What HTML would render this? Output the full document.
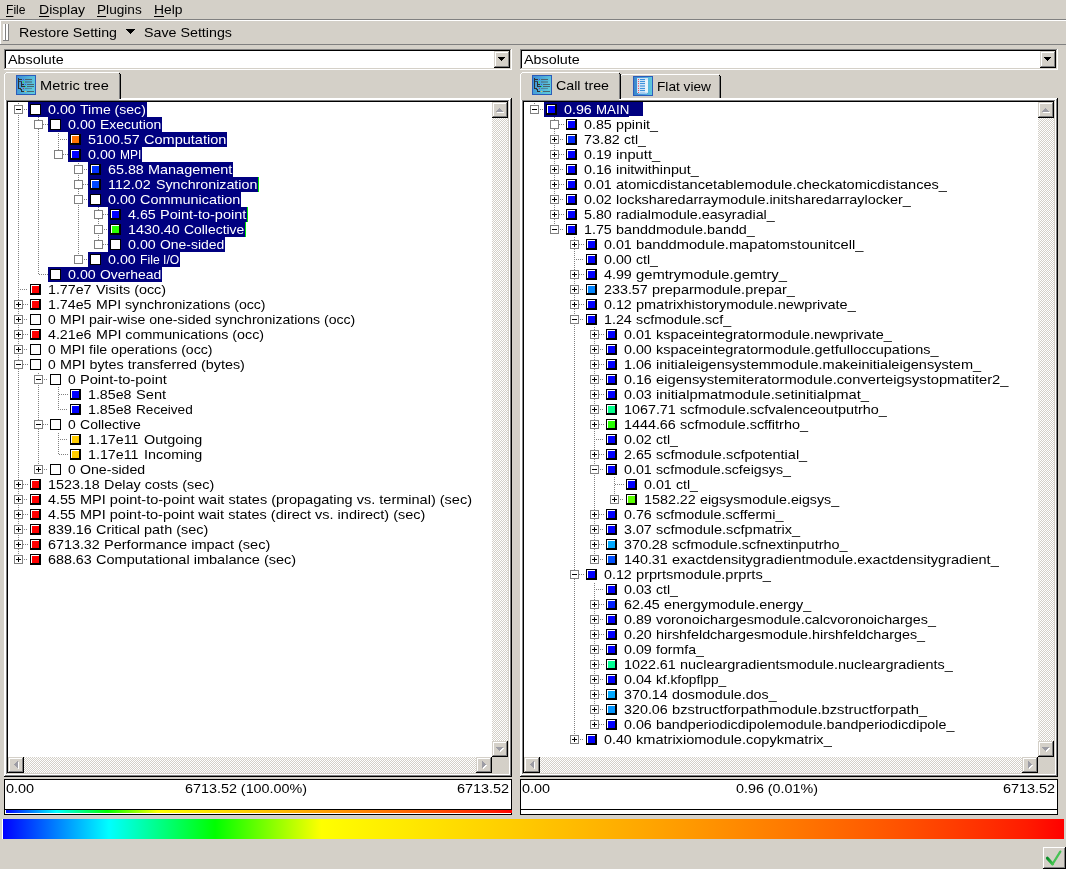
<!DOCTYPE html>
<html><head><meta charset="utf-8"><title>Cube</title><style>
html,body{margin:0;padding:0;}
body{width:1066px;height:869px;background:#d4d0c8;position:relative;overflow:hidden;font-family:"Liberation Sans",sans-serif;}
div,span,svg{position:absolute;}
#w{left:0;top:0;width:1066px;height:869px;will-change:transform;}
.t{white-space:nowrap;transform-origin:0 0;display:block;}
u{text-decoration:underline;text-underline-offset:2px;text-decoration-thickness:1px;}
.dot{background-image:repeating-conic-gradient(#808080 0 25%,transparent 0 50%);background-size:2px 2px;}
.chk{background-color:#fff;background-image:repeating-conic-gradient(#d4d0c8 0 25%,transparent 0 50%);background-size:2px 2px;}
</style></head><body><div id="w">
<span class="t" style="left:6px;top:2px;height:16px;line-height:16px;color:#000;font-size:13.5px;transform:scaleX(0.8964)"><u>F</u>ile</span>
<span class="t" style="left:38.5px;top:2px;height:16px;line-height:16px;color:#000;font-size:13.5px;transform:scaleX(1.0392)"><u>D</u>isplay</span>
<span class="t" style="left:97px;top:2px;height:16px;line-height:16px;color:#000;font-size:13.5px;transform:scaleX(1.0096)"><u>P</u>lugins</span>
<span class="t" style="left:154px;top:2px;height:16px;line-height:16px;color:#000;font-size:13.5px;transform:scaleX(1.0265)"><u>H</u>elp</span>
<div style="left:0px;top:19px;width:1066px;height:1px;background:#808080;"></div>
<div style="left:0px;top:20px;width:1066px;height:1px;background:#fff;"></div>
<div style="left:0px;top:20px;width:1px;height:24px;background:#fff;"></div>
<div style="left:0px;top:44px;width:1066px;height:1px;background:#808080;"></div>
<div style="left:3px;top:24px;width:2px;height:17px;background:#fff;"></div>
<div style="left:5px;top:24px;width:1px;height:17px;background:#808080;"></div>
<div style="left:3px;top:40px;width:3px;height:1px;background:#808080;"></div>
<div style="left:6px;top:24px;width:2px;height:17px;background:#fff;"></div>
<div style="left:8px;top:24px;width:1px;height:17px;background:#808080;"></div>
<div style="left:6px;top:40px;width:3px;height:1px;background:#808080;"></div>
<span class="t" style="left:18.8px;top:25px;height:15px;line-height:15px;color:#000;font-size:13.5px;transform:scaleX(1.0532)">Restore Setting</span>
<div style="left:126px;top:29px;width:9px;height:1px;background:#000;"></div>
<div style="left:127px;top:30px;width:7px;height:1px;background:#000;"></div>
<div style="left:128px;top:31px;width:5px;height:1px;background:#000;"></div>
<div style="left:129px;top:32px;width:3px;height:1px;background:#000;"></div>
<div style="left:130px;top:33px;width:1px;height:1px;background:#000;"></div>
<span class="t" style="left:144.3px;top:25px;height:15px;line-height:15px;color:#000;font-size:13.5px;transform:scaleX(1.0564)">Save Settings</span>
<div style="left:4px;top:49px;width:508px;height:21px;background:#fff;"></div>
<div style="left:4px;top:49px;width:507px;height:20px;background:#808080;"></div>
<div style="left:5px;top:50px;width:506px;height:19px;background:#d4d0c8;"></div>
<div style="left:5px;top:50px;width:505px;height:18px;background:#000;"></div>
<div style="left:6px;top:51px;width:504px;height:17px;background:#fff;"></div>
<div style="left:494px;top:51px;width:16px;height:17px;background:#000;"></div>
<div style="left:494px;top:51px;width:15px;height:16px;background:#d4d0c8;"></div>
<div style="left:495px;top:52px;width:14px;height:15px;background:#808080;"></div>
<div style="left:495px;top:52px;width:13px;height:14px;background:#fff;"></div>
<div style="left:496px;top:53px;width:12px;height:13px;background:#d4d0c8;"></div>
<div style="left:498px;top:57px;width:7px;height:1px;background:#000;"></div>
<div style="left:499px;top:58px;width:5px;height:1px;background:#000;"></div>
<div style="left:500px;top:59px;width:3px;height:1px;background:#000;"></div>
<div style="left:501px;top:60px;width:1px;height:1px;background:#000;"></div>
<span class="t" style="left:8px;top:51px;height:17px;line-height:17px;color:#000;font-size:13.5px;transform:scaleX(1.0617)">Absolute</span>
<div style="left:520px;top:49px;width:538px;height:21px;background:#fff;"></div>
<div style="left:520px;top:49px;width:537px;height:20px;background:#808080;"></div>
<div style="left:521px;top:50px;width:536px;height:19px;background:#d4d0c8;"></div>
<div style="left:521px;top:50px;width:535px;height:18px;background:#000;"></div>
<div style="left:522px;top:51px;width:534px;height:17px;background:#fff;"></div>
<div style="left:1040px;top:51px;width:16px;height:17px;background:#000;"></div>
<div style="left:1040px;top:51px;width:15px;height:16px;background:#d4d0c8;"></div>
<div style="left:1041px;top:52px;width:14px;height:15px;background:#808080;"></div>
<div style="left:1041px;top:52px;width:13px;height:14px;background:#fff;"></div>
<div style="left:1042px;top:53px;width:12px;height:13px;background:#d4d0c8;"></div>
<div style="left:1044px;top:57px;width:7px;height:1px;background:#000;"></div>
<div style="left:1045px;top:58px;width:5px;height:1px;background:#000;"></div>
<div style="left:1046px;top:59px;width:3px;height:1px;background:#000;"></div>
<div style="left:1047px;top:60px;width:1px;height:1px;background:#000;"></div>
<span class="t" style="left:524px;top:51px;height:17px;line-height:17px;color:#000;font-size:13.5px;transform:scaleX(1.0617)">Absolute</span>
<div style="left:4px;top:98px;width:508px;height:679px;background:#000;"></div>
<div style="left:4px;top:98px;width:507px;height:678px;background:#fff;"></div>
<div style="left:5px;top:99px;width:506px;height:677px;background:#808080;"></div>
<div style="left:5px;top:99px;width:505px;height:676px;background:#fff;"></div>
<div style="left:6px;top:100px;width:504px;height:675px;background:#d4d0c8;"></div>
<div style="left:6px;top:100px;width:504px;height:675px;background:#fff;"></div>
<div style="left:6px;top:100px;width:503px;height:674px;background:#808080;"></div>
<div style="left:7px;top:101px;width:502px;height:673px;background:#d4d0c8;"></div>
<div style="left:7px;top:101px;width:501px;height:672px;background:#000;"></div>
<div style="left:8px;top:102px;width:500px;height:671px;background:#fff;"></div>
<div style="left:520px;top:98px;width:538px;height:679px;background:#000;"></div>
<div style="left:520px;top:98px;width:537px;height:678px;background:#fff;"></div>
<div style="left:521px;top:99px;width:536px;height:677px;background:#808080;"></div>
<div style="left:521px;top:99px;width:535px;height:676px;background:#fff;"></div>
<div style="left:522px;top:100px;width:534px;height:675px;background:#d4d0c8;"></div>
<div style="left:522px;top:100px;width:534px;height:675px;background:#fff;"></div>
<div style="left:522px;top:100px;width:533px;height:674px;background:#808080;"></div>
<div style="left:523px;top:101px;width:532px;height:673px;background:#d4d0c8;"></div>
<div style="left:523px;top:101px;width:531px;height:672px;background:#000;"></div>
<div style="left:524px;top:102px;width:530px;height:671px;background:#fff;"></div>
<div style="left:4px;top:72px;width:117px;height:27px;background:#d4d0c8;"></div>
<div style="left:4px;top:74px;width:1px;height:25px;background:#fff;"></div>
<div style="left:5px;top:73px;width:1px;height:1px;background:#fff;"></div>
<div style="left:6px;top:72px;width:113px;height:1px;background:#fff;"></div>
<div style="left:120px;top:74px;width:1px;height:25px;background:#000;"></div>
<div style="left:119px;top:73px;width:1px;height:26px;background:#808080;"></div>
<div style="left:119px;top:73px;width:1px;height:1px;background:#000;"></div>
<div style="left:5px;top:99px;width:114px;height:1px;background:#d4d0c8;"></div>
<svg style="left:16px;top:75px" width="20" height="20" viewBox="0 0 20 20" shape-rendering="crispEdges"><defs><linearGradient id="gi1" x1="0" y1="0" x2="1" y2="0.35"><stop offset="0" stop-color="#3c8cd6"/><stop offset="1" stop-color="#5ec8dc"/></linearGradient></defs><rect x="0" y="0" width="20" height="20" fill="#2c5cba"/><rect x="1" y="1" width="18" height="18" fill="url(#gi1)"/><rect x="2" y="3" width="1" height="11" fill="#2e3236"/><rect x="2" y="4" width="4" height="1" fill="#2e3236"/><rect x="2" y="6" width="4" height="1" fill="#2e3236" opacity="0.75"/><rect x="5" y="7" width="1" height="5" fill="#2e3236"/><rect x="5" y="9" width="3" height="1" fill="#2e3236"/><rect x="5" y="11" width="4" height="1" fill="#2e3236"/><rect x="2" y="13" width="3" height="1" fill="#2e3236"/><rect x="4" y="13" width="1" height="2" fill="#2e3236" opacity="0.8"/><rect x="5" y="14" width="1" height="3" fill="#2e3236"/><rect x="5" y="16" width="3" height="1" fill="#2e3236"/><rect x="9" y="4" width="7" height="1" fill="#4a6670"/><rect x="9" y="6" width="7" height="2" fill="#4a6670" opacity="0.5"/><rect x="11" y="9" width="7" height="1" fill="#4a6670"/><rect x="11" y="11" width="7" height="1" fill="#4a6670"/><rect x="9" y="13" width="7" height="1" fill="#4a6670" opacity="0.55"/><rect x="11" y="16" width="7" height="1" fill="#4a6670"/><rect x="7" y="4" width="1" height="1" fill="#3c50dc"/><rect x="7" y="6" width="1" height="2" fill="#34d868"/><rect x="9" y="9" width="1" height="1" fill="#3c58dc"/><rect x="9" y="11" width="1" height="1" fill="#1cec3c"/><rect x="7" y="13" width="1" height="1" fill="#d23450"/><rect x="9" y="16" width="1" height="1" fill="#ecd23c"/></svg>
<span class="t" style="left:40px;top:78px;height:15px;line-height:15px;color:#000;font-size:13.5px;transform:scaleX(1.0794)">Metric tree</span>
<div style="left:620px;top:74px;width:101px;height:24px;background:#d4d0c8;"></div>
<div style="left:620px;top:76px;width:1px;height:22px;background:#fff;"></div>
<div style="left:621px;top:75px;width:1px;height:1px;background:#fff;"></div>
<div style="left:622px;top:74px;width:97px;height:1px;background:#fff;"></div>
<div style="left:720px;top:76px;width:1px;height:22px;background:#000;"></div>
<div style="left:719px;top:75px;width:1px;height:23px;background:#808080;"></div>
<div style="left:719px;top:75px;width:1px;height:1px;background:#000;"></div>
<svg style="left:633px;top:76px" width="20" height="20" viewBox="0 0 20 20" shape-rendering="crispEdges"><defs><linearGradient id="gi2" x1="0" y1="0" x2="1" y2="0"><stop offset="0" stop-color="#3a88cc"/><stop offset="0.55" stop-color="#4c9edc"/><stop offset="1" stop-color="#5ecadc"/></linearGradient></defs><rect x="0" y="0" width="20" height="20" fill="#2c5cba"/><rect x="1" y="1" width="18" height="18" fill="url(#gi2)"/><rect x="4" y="2" width="11" height="15" fill="#cfe4f6"/><rect x="12" y="4" width="3" height="12" fill="#e8f3fb"/><rect x="5" y="17" width="9" height="1" fill="#9cc8ee"/><rect x="5" y="3" width="1" height="1" fill="#ee5060"/><rect x="7" y="3" width="5" height="1" fill="#3c92dc"/><rect x="5" y="5" width="1" height="1" fill="#ee5060"/><rect x="7" y="5" width="5" height="1" fill="#3c92dc"/><rect x="5" y="7" width="1" height="1" fill="#ee5060"/><rect x="7" y="7" width="5" height="1" fill="#3c92dc"/><rect x="5" y="12" width="1" height="1" fill="#ee5060"/><rect x="7" y="12" width="5" height="1" fill="#3c92dc"/><rect x="5" y="14" width="1" height="1" fill="#ee5060"/><rect x="7" y="14" width="5" height="1" fill="#3c92dc"/><rect x="5" y="9" width="1" height="2" fill="#f08090"/><rect x="7" y="9" width="5" height="2" fill="#7cb4e6"/><rect x="5" y="16" width="1" height="1" fill="#ee5060"/><rect x="7" y="16" width="5" height="1" fill="#a8d0f0"/></svg>
<span class="t" style="left:657px;top:79px;height:15px;line-height:15px;color:#000;font-size:13.5px;transform:scaleX(1.0139)">Flat view</span>
<div style="left:520px;top:72px;width:101px;height:27px;background:#d4d0c8;"></div>
<div style="left:520px;top:74px;width:1px;height:25px;background:#fff;"></div>
<div style="left:521px;top:73px;width:1px;height:1px;background:#fff;"></div>
<div style="left:522px;top:72px;width:97px;height:1px;background:#fff;"></div>
<div style="left:620px;top:74px;width:1px;height:25px;background:#000;"></div>
<div style="left:619px;top:73px;width:1px;height:26px;background:#808080;"></div>
<div style="left:619px;top:73px;width:1px;height:1px;background:#000;"></div>
<div style="left:521px;top:99px;width:98px;height:1px;background:#d4d0c8;"></div>
<svg style="left:532px;top:75px" width="20" height="20" viewBox="0 0 20 20" shape-rendering="crispEdges"><defs><linearGradient id="gi3" x1="0" y1="0" x2="1" y2="0.35"><stop offset="0" stop-color="#3c8cd6"/><stop offset="1" stop-color="#5ec8dc"/></linearGradient></defs><rect x="0" y="0" width="20" height="20" fill="#2c5cba"/><rect x="1" y="1" width="18" height="18" fill="url(#gi3)"/><rect x="2" y="3" width="1" height="11" fill="#2e3236"/><rect x="2" y="4" width="4" height="1" fill="#2e3236"/><rect x="2" y="6" width="4" height="1" fill="#2e3236" opacity="0.75"/><rect x="5" y="7" width="1" height="5" fill="#2e3236"/><rect x="5" y="9" width="3" height="1" fill="#2e3236"/><rect x="5" y="11" width="4" height="1" fill="#2e3236"/><rect x="2" y="13" width="3" height="1" fill="#2e3236"/><rect x="4" y="13" width="1" height="2" fill="#2e3236" opacity="0.8"/><rect x="5" y="14" width="1" height="3" fill="#2e3236"/><rect x="5" y="16" width="3" height="1" fill="#2e3236"/><rect x="9" y="4" width="7" height="1" fill="#4a6670"/><rect x="9" y="6" width="7" height="2" fill="#4a6670" opacity="0.5"/><rect x="11" y="9" width="7" height="1" fill="#4a6670"/><rect x="11" y="11" width="7" height="1" fill="#4a6670"/><rect x="9" y="13" width="7" height="1" fill="#4a6670" opacity="0.55"/><rect x="11" y="16" width="7" height="1" fill="#4a6670"/><rect x="7" y="4" width="1" height="1" fill="#3c50dc"/><rect x="7" y="6" width="1" height="2" fill="#34d868"/><rect x="9" y="9" width="1" height="1" fill="#3c58dc"/><rect x="9" y="11" width="1" height="1" fill="#1cec3c"/><rect x="7" y="13" width="1" height="1" fill="#d23450"/><rect x="9" y="16" width="1" height="1" fill="#ecd23c"/></svg>
<span class="t" style="left:556px;top:78px;height:15px;line-height:15px;color:#000;font-size:13.5px;transform:scaleX(1.0543)">Call tree</span>
<div class="chk" style="left:492px;top:102px;width:16px;height:655px;background-position:0 0;"></div>
<div style="left:492px;top:102px;width:16px;height:16px;background:#000;"></div>
<div style="left:492px;top:102px;width:15px;height:15px;background:#d4d0c8;"></div>
<div style="left:493px;top:103px;width:14px;height:14px;background:#808080;"></div>
<div style="left:493px;top:103px;width:13px;height:13px;background:#fff;"></div>
<div style="left:494px;top:104px;width:12px;height:12px;background:#d4d0c8;"></div>
<div style="left:500px;top:109px;width:1px;height:1px;background:#fff;"></div>
<div style="left:499px;top:110px;width:3px;height:1px;background:#fff;"></div>
<div style="left:498px;top:111px;width:5px;height:1px;background:#fff;"></div>
<div style="left:497px;top:112px;width:7px;height:1px;background:#fff;"></div>
<div style="left:499px;top:108px;width:1px;height:1px;background:#9c9ca4;"></div>
<div style="left:498px;top:109px;width:3px;height:1px;background:#9c9ca4;"></div>
<div style="left:497px;top:110px;width:5px;height:1px;background:#9c9ca4;"></div>
<div style="left:496px;top:111px;width:7px;height:1px;background:#9c9ca4;"></div>
<div style="left:492px;top:741px;width:16px;height:16px;background:#000;"></div>
<div style="left:492px;top:741px;width:15px;height:15px;background:#d4d0c8;"></div>
<div style="left:493px;top:742px;width:14px;height:14px;background:#808080;"></div>
<div style="left:493px;top:742px;width:13px;height:13px;background:#fff;"></div>
<div style="left:494px;top:743px;width:12px;height:12px;background:#d4d0c8;"></div>
<div style="left:497px;top:748px;width:7px;height:1px;background:#fff;"></div>
<div style="left:498px;top:749px;width:5px;height:1px;background:#fff;"></div>
<div style="left:499px;top:750px;width:3px;height:1px;background:#fff;"></div>
<div style="left:500px;top:751px;width:1px;height:1px;background:#fff;"></div>
<div style="left:496px;top:747px;width:7px;height:1px;background:#9c9ca4;"></div>
<div style="left:497px;top:748px;width:5px;height:1px;background:#9c9ca4;"></div>
<div style="left:498px;top:749px;width:3px;height:1px;background:#9c9ca4;"></div>
<div style="left:499px;top:750px;width:1px;height:1px;background:#9c9ca4;"></div>
<div class="chk" style="left:8px;top:757px;width:484px;height:16px;background-position:0 1px;"></div>
<div style="left:8px;top:757px;width:16px;height:16px;background:#000;"></div>
<div style="left:8px;top:757px;width:15px;height:15px;background:#d4d0c8;"></div>
<div style="left:9px;top:758px;width:14px;height:14px;background:#808080;"></div>
<div style="left:9px;top:758px;width:13px;height:13px;background:#fff;"></div>
<div style="left:10px;top:759px;width:12px;height:12px;background:#d4d0c8;"></div>
<div style="left:15px;top:765px;width:1px;height:1px;background:#fff;"></div>
<div style="left:16px;top:764px;width:1px;height:3px;background:#fff;"></div>
<div style="left:17px;top:763px;width:1px;height:5px;background:#fff;"></div>
<div style="left:18px;top:762px;width:1px;height:7px;background:#fff;"></div>
<div style="left:14px;top:764px;width:1px;height:1px;background:#9c9ca4;"></div>
<div style="left:15px;top:763px;width:1px;height:3px;background:#9c9ca4;"></div>
<div style="left:16px;top:762px;width:1px;height:5px;background:#9c9ca4;"></div>
<div style="left:17px;top:761px;width:1px;height:7px;background:#9c9ca4;"></div>
<div style="left:476px;top:757px;width:16px;height:16px;background:#000;"></div>
<div style="left:476px;top:757px;width:15px;height:15px;background:#d4d0c8;"></div>
<div style="left:477px;top:758px;width:14px;height:14px;background:#808080;"></div>
<div style="left:477px;top:758px;width:13px;height:13px;background:#fff;"></div>
<div style="left:478px;top:759px;width:12px;height:12px;background:#d4d0c8;"></div>
<div style="left:483px;top:762px;width:1px;height:7px;background:#fff;"></div>
<div style="left:484px;top:763px;width:1px;height:5px;background:#fff;"></div>
<div style="left:485px;top:764px;width:1px;height:3px;background:#fff;"></div>
<div style="left:486px;top:765px;width:1px;height:1px;background:#fff;"></div>
<div style="left:482px;top:761px;width:1px;height:7px;background:#9c9ca4;"></div>
<div style="left:483px;top:762px;width:1px;height:5px;background:#9c9ca4;"></div>
<div style="left:484px;top:763px;width:1px;height:3px;background:#9c9ca4;"></div>
<div style="left:485px;top:764px;width:1px;height:1px;background:#9c9ca4;"></div>
<div style="left:492px;top:757px;width:16px;height:16px;background:#d4d0c8;"></div>
<div class="chk" style="left:1038px;top:102px;width:16px;height:655px;background-position:0 0;"></div>
<div style="left:1038px;top:102px;width:16px;height:16px;background:#000;"></div>
<div style="left:1038px;top:102px;width:15px;height:15px;background:#d4d0c8;"></div>
<div style="left:1039px;top:103px;width:14px;height:14px;background:#808080;"></div>
<div style="left:1039px;top:103px;width:13px;height:13px;background:#fff;"></div>
<div style="left:1040px;top:104px;width:12px;height:12px;background:#d4d0c8;"></div>
<div style="left:1046px;top:109px;width:1px;height:1px;background:#fff;"></div>
<div style="left:1045px;top:110px;width:3px;height:1px;background:#fff;"></div>
<div style="left:1044px;top:111px;width:5px;height:1px;background:#fff;"></div>
<div style="left:1043px;top:112px;width:7px;height:1px;background:#fff;"></div>
<div style="left:1045px;top:108px;width:1px;height:1px;background:#9c9ca4;"></div>
<div style="left:1044px;top:109px;width:3px;height:1px;background:#9c9ca4;"></div>
<div style="left:1043px;top:110px;width:5px;height:1px;background:#9c9ca4;"></div>
<div style="left:1042px;top:111px;width:7px;height:1px;background:#9c9ca4;"></div>
<div style="left:1038px;top:741px;width:16px;height:16px;background:#000;"></div>
<div style="left:1038px;top:741px;width:15px;height:15px;background:#d4d0c8;"></div>
<div style="left:1039px;top:742px;width:14px;height:14px;background:#808080;"></div>
<div style="left:1039px;top:742px;width:13px;height:13px;background:#fff;"></div>
<div style="left:1040px;top:743px;width:12px;height:12px;background:#d4d0c8;"></div>
<div style="left:1043px;top:748px;width:7px;height:1px;background:#fff;"></div>
<div style="left:1044px;top:749px;width:5px;height:1px;background:#fff;"></div>
<div style="left:1045px;top:750px;width:3px;height:1px;background:#fff;"></div>
<div style="left:1046px;top:751px;width:1px;height:1px;background:#fff;"></div>
<div style="left:1042px;top:747px;width:7px;height:1px;background:#9c9ca4;"></div>
<div style="left:1043px;top:748px;width:5px;height:1px;background:#9c9ca4;"></div>
<div style="left:1044px;top:749px;width:3px;height:1px;background:#9c9ca4;"></div>
<div style="left:1045px;top:750px;width:1px;height:1px;background:#9c9ca4;"></div>
<div class="chk" style="left:524px;top:757px;width:514px;height:16px;background-position:0 1px;"></div>
<div style="left:524px;top:757px;width:16px;height:16px;background:#000;"></div>
<div style="left:524px;top:757px;width:15px;height:15px;background:#d4d0c8;"></div>
<div style="left:525px;top:758px;width:14px;height:14px;background:#808080;"></div>
<div style="left:525px;top:758px;width:13px;height:13px;background:#fff;"></div>
<div style="left:526px;top:759px;width:12px;height:12px;background:#d4d0c8;"></div>
<div style="left:531px;top:765px;width:1px;height:1px;background:#fff;"></div>
<div style="left:532px;top:764px;width:1px;height:3px;background:#fff;"></div>
<div style="left:533px;top:763px;width:1px;height:5px;background:#fff;"></div>
<div style="left:534px;top:762px;width:1px;height:7px;background:#fff;"></div>
<div style="left:530px;top:764px;width:1px;height:1px;background:#9c9ca4;"></div>
<div style="left:531px;top:763px;width:1px;height:3px;background:#9c9ca4;"></div>
<div style="left:532px;top:762px;width:1px;height:5px;background:#9c9ca4;"></div>
<div style="left:533px;top:761px;width:1px;height:7px;background:#9c9ca4;"></div>
<div style="left:1022px;top:757px;width:16px;height:16px;background:#000;"></div>
<div style="left:1022px;top:757px;width:15px;height:15px;background:#d4d0c8;"></div>
<div style="left:1023px;top:758px;width:14px;height:14px;background:#808080;"></div>
<div style="left:1023px;top:758px;width:13px;height:13px;background:#fff;"></div>
<div style="left:1024px;top:759px;width:12px;height:12px;background:#d4d0c8;"></div>
<div style="left:1029px;top:762px;width:1px;height:7px;background:#fff;"></div>
<div style="left:1030px;top:763px;width:1px;height:5px;background:#fff;"></div>
<div style="left:1031px;top:764px;width:1px;height:3px;background:#fff;"></div>
<div style="left:1032px;top:765px;width:1px;height:1px;background:#fff;"></div>
<div style="left:1028px;top:761px;width:1px;height:7px;background:#9c9ca4;"></div>
<div style="left:1029px;top:762px;width:1px;height:5px;background:#9c9ca4;"></div>
<div style="left:1030px;top:763px;width:1px;height:3px;background:#9c9ca4;"></div>
<div style="left:1031px;top:764px;width:1px;height:1px;background:#9c9ca4;"></div>
<div style="left:1038px;top:757px;width:16px;height:16px;background:#d4d0c8;"></div>
<div style="left:28px;top:102px;width:119px;height:15px;background:#000080;"></div>
<div style="left:48px;top:117px;width:114px;height:15px;background:#000080;"></div>
<div style="left:68px;top:132px;width:159px;height:15px;background:#000080;"></div>
<div style="left:68px;top:147px;width:74px;height:15px;background:#000080;"></div>
<div style="left:88px;top:162px;width:145px;height:15px;background:#000080;"></div>
<div style="left:88px;top:177px;width:170px;height:15px;background:#000080;"></div>
<div style="left:88px;top:192px;width:153px;height:15px;background:#000080;"></div>
<div style="left:108px;top:207px;width:139px;height:15px;background:#000080;"></div>
<div style="left:108px;top:222px;width:137px;height:15px;background:#000080;"></div>
<div style="left:108px;top:237px;width:117px;height:15px;background:#000080;"></div>
<div style="left:88px;top:252px;width:92px;height:15px;background:#000080;"></div>
<div style="left:48px;top:267px;width:114px;height:15px;background:#000080;"></div>
<div class="dot" style="left:18px;top:102px;width:1px;height:3px;background-position:0px 0px;"></div>
<div class="dot" style="left:18px;top:114px;width:1px;height:3px;background-position:0px 0px;"></div>
<div class="dot" style="left:23px;top:109px;width:5px;height:1px;background-position:-1px -1px;"></div>
<div style="left:14px;top:105px;width:9px;height:9px;background:#808080;"></div>
<div style="left:15px;top:106px;width:7px;height:7px;background:#fff;"></div>
<div style="left:16px;top:109px;width:5px;height:1px;background:#000;"></div>
<div style="left:30px;top:104px;width:11px;height:11px;background:#000;"></div>
<div style="left:31px;top:105px;width:9px;height:9px;background:#fff;"></div>
<span class="t" style="left:48.3px;top:102px;height:15px;line-height:15px;color:#fff;font-size:13.5px;transform:scaleX(1.0566)">0.00</span>
<span class="t" style="left:80.0625px;top:102px;height:15px;line-height:15px;color:#fff;font-size:13.5px;transform:scaleX(1.0406)">Time (sec)</span>
<div class="dot" style="left:18px;top:117px;width:1px;height:15px;background-position:0px -1px;"></div>
<div class="dot" style="left:38px;top:117px;width:1px;height:3px;background-position:0px -1px;"></div>
<div class="dot" style="left:38px;top:129px;width:1px;height:3px;background-position:0px -1px;"></div>
<div class="dot" style="left:43px;top:124px;width:5px;height:1px;background-position:-1px 0px;"></div>
<div style="left:34px;top:120px;width:9px;height:9px;background:#808080;"></div>
<div style="left:35px;top:121px;width:7px;height:7px;background:#fff;"></div>
<div style="left:50px;top:119px;width:11px;height:11px;background:#000;"></div>
<div style="left:51px;top:120px;width:9px;height:9px;background:#fff;"></div>
<span class="t" style="left:68.3px;top:117px;height:15px;line-height:15px;color:#fff;font-size:13.5px;transform:scaleX(1.0566)">0.00</span>
<span class="t" style="left:100.0625px;top:117px;height:15px;line-height:15px;color:#fff;font-size:13.5px;transform:scaleX(1.0346)">Execution</span>
<div class="dot" style="left:18px;top:132px;width:1px;height:15px;background-position:0px 0px;"></div>
<div class="dot" style="left:38px;top:132px;width:1px;height:15px;background-position:0px 0px;"></div>
<div class="dot" style="left:58px;top:132px;width:1px;height:8px;background-position:0px 0px;"></div>
<div class="dot" style="left:58px;top:140px;width:1px;height:7px;background-position:0px 0px;"></div>
<div class="dot" style="left:59px;top:139px;width:9px;height:1px;background-position:-1px -1px;"></div>
<div style="left:70px;top:134px;width:11px;height:11px;background:#000;"></div>
<div style="left:71px;top:135px;width:8px;height:8px;background:#fff;"></div>
<div style="left:72px;top:136px;width:7px;height:7px;background:#ff7400;"></div>
<span class="t" style="left:88.3px;top:132px;height:15px;line-height:15px;color:#fff;font-size:13.5px;transform:scaleX(1.0617)">5100.57</span>
<span class="t" style="left:144.109375px;top:132px;height:15px;line-height:15px;color:#fff;font-size:13.5px;transform:scaleX(1.0751)">Computation</span>
<div class="dot" style="left:18px;top:147px;width:1px;height:15px;background-position:0px -1px;"></div>
<div class="dot" style="left:38px;top:147px;width:1px;height:15px;background-position:0px -1px;"></div>
<div class="dot" style="left:58px;top:147px;width:1px;height:3px;background-position:0px -1px;"></div>
<div class="dot" style="left:63px;top:154px;width:5px;height:1px;background-position:-1px 0px;"></div>
<div style="left:54px;top:150px;width:9px;height:9px;background:#808080;"></div>
<div style="left:55px;top:151px;width:7px;height:7px;background:#fff;"></div>
<div style="left:70px;top:149px;width:11px;height:11px;background:#000;"></div>
<div style="left:71px;top:150px;width:8px;height:8px;background:#fff;"></div>
<div style="left:72px;top:151px;width:7px;height:7px;background:#0000ff;"></div>
<span class="t" style="left:88.3px;top:147px;height:15px;line-height:15px;color:#fff;font-size:13.5px;transform:scaleX(1.0566)">0.00</span>
<span class="t" style="left:120.0625px;top:147px;height:15px;line-height:15px;color:#fff;font-size:13.5px;transform:scaleX(0.8890)">MPI</span>
<div class="dot" style="left:18px;top:162px;width:1px;height:15px;background-position:0px 0px;"></div>
<div class="dot" style="left:38px;top:162px;width:1px;height:15px;background-position:0px 0px;"></div>
<div class="dot" style="left:78px;top:162px;width:1px;height:3px;background-position:0px 0px;"></div>
<div class="dot" style="left:78px;top:174px;width:1px;height:3px;background-position:0px 0px;"></div>
<div class="dot" style="left:83px;top:169px;width:5px;height:1px;background-position:-1px -1px;"></div>
<div style="left:74px;top:165px;width:9px;height:9px;background:#808080;"></div>
<div style="left:75px;top:166px;width:7px;height:7px;background:#fff;"></div>
<div style="left:90px;top:164px;width:11px;height:11px;background:#000;"></div>
<div style="left:91px;top:165px;width:8px;height:8px;background:#fff;"></div>
<div style="left:92px;top:166px;width:7px;height:7px;background:#0030ff;"></div>
<span class="t" style="left:108.3px;top:162px;height:15px;line-height:15px;color:#fff;font-size:13.5px;transform:scaleX(1.0591)">65.88</span>
<span class="t" style="left:148.078125px;top:162px;height:15px;line-height:15px;color:#fff;font-size:13.5px;transform:scaleX(1.0701)">Management</span>
<div class="dot" style="left:18px;top:177px;width:1px;height:15px;background-position:0px -1px;"></div>
<div class="dot" style="left:38px;top:177px;width:1px;height:15px;background-position:0px -1px;"></div>
<div class="dot" style="left:78px;top:177px;width:1px;height:3px;background-position:0px -1px;"></div>
<div class="dot" style="left:78px;top:189px;width:1px;height:3px;background-position:0px -1px;"></div>
<div class="dot" style="left:83px;top:184px;width:5px;height:1px;background-position:-1px 0px;"></div>
<div style="left:74px;top:180px;width:9px;height:9px;background:#808080;"></div>
<div style="left:75px;top:181px;width:7px;height:7px;background:#fff;"></div>
<div style="left:90px;top:179px;width:11px;height:11px;background:#000;"></div>
<div style="left:91px;top:180px;width:8px;height:8px;background:#fff;"></div>
<div style="left:92px;top:181px;width:7px;height:7px;background:#0048ff;"></div>
<span class="t" style="left:108.3px;top:177px;height:15px;line-height:15px;color:#fff;font-size:13.5px;transform:scaleX(1.0606)">112.02</span>
<span class="t" style="left:156.09375px;top:177px;height:15px;line-height:15px;color:#fff;font-size:13.5px;transform:scaleX(1.0547)">Synchronization</span>
<div class="dot" style="left:18px;top:192px;width:1px;height:15px;background-position:0px 0px;"></div>
<div class="dot" style="left:38px;top:192px;width:1px;height:15px;background-position:0px 0px;"></div>
<div class="dot" style="left:78px;top:192px;width:1px;height:3px;background-position:0px 0px;"></div>
<div class="dot" style="left:78px;top:204px;width:1px;height:3px;background-position:0px 0px;"></div>
<div class="dot" style="left:83px;top:199px;width:5px;height:1px;background-position:-1px -1px;"></div>
<div style="left:74px;top:195px;width:9px;height:9px;background:#808080;"></div>
<div style="left:75px;top:196px;width:7px;height:7px;background:#fff;"></div>
<div style="left:90px;top:194px;width:11px;height:11px;background:#000;"></div>
<div style="left:91px;top:195px;width:9px;height:9px;background:#fff;"></div>
<span class="t" style="left:108.3px;top:192px;height:15px;line-height:15px;color:#fff;font-size:13.5px;transform:scaleX(1.0566)">0.00</span>
<span class="t" style="left:140.0625px;top:192px;height:15px;line-height:15px;color:#fff;font-size:13.5px;transform:scaleX(1.0698)">Communication</span>
<div class="dot" style="left:18px;top:207px;width:1px;height:15px;background-position:0px -1px;"></div>
<div class="dot" style="left:38px;top:207px;width:1px;height:15px;background-position:0px -1px;"></div>
<div class="dot" style="left:78px;top:207px;width:1px;height:15px;background-position:0px -1px;"></div>
<div class="dot" style="left:98px;top:207px;width:1px;height:3px;background-position:0px -1px;"></div>
<div class="dot" style="left:98px;top:219px;width:1px;height:3px;background-position:0px -1px;"></div>
<div class="dot" style="left:103px;top:214px;width:5px;height:1px;background-position:-1px 0px;"></div>
<div style="left:94px;top:210px;width:9px;height:9px;background:#808080;"></div>
<div style="left:95px;top:211px;width:7px;height:7px;background:#fff;"></div>
<div style="left:110px;top:209px;width:11px;height:11px;background:#000;"></div>
<div style="left:111px;top:210px;width:8px;height:8px;background:#fff;"></div>
<div style="left:112px;top:211px;width:7px;height:7px;background:#0000ff;"></div>
<span class="t" style="left:128.3px;top:207px;height:15px;line-height:15px;color:#fff;font-size:13.5px;transform:scaleX(1.0566)">4.65</span>
<span class="t" style="left:160.0625px;top:207px;height:15px;line-height:15px;color:#fff;font-size:13.5px;transform:scaleX(1.0753)">Point-to-point</span>
<div class="dot" style="left:18px;top:222px;width:1px;height:15px;background-position:0px 0px;"></div>
<div class="dot" style="left:38px;top:222px;width:1px;height:15px;background-position:0px 0px;"></div>
<div class="dot" style="left:78px;top:222px;width:1px;height:15px;background-position:0px 0px;"></div>
<div class="dot" style="left:98px;top:222px;width:1px;height:3px;background-position:0px 0px;"></div>
<div class="dot" style="left:98px;top:234px;width:1px;height:3px;background-position:0px 0px;"></div>
<div class="dot" style="left:103px;top:229px;width:5px;height:1px;background-position:-1px -1px;"></div>
<div style="left:94px;top:225px;width:9px;height:9px;background:#808080;"></div>
<div style="left:95px;top:226px;width:7px;height:7px;background:#fff;"></div>
<div style="left:110px;top:224px;width:11px;height:11px;background:#000;"></div>
<div style="left:111px;top:225px;width:8px;height:8px;background:#fff;"></div>
<div style="left:112px;top:226px;width:7px;height:7px;background:#2aff00;"></div>
<span class="t" style="left:128.3px;top:222px;height:15px;line-height:15px;color:#fff;font-size:13.5px;transform:scaleX(1.0617)">1430.40</span>
<span class="t" style="left:184.109375px;top:222px;height:15px;line-height:15px;color:#fff;font-size:13.5px;transform:scaleX(1.0302)">Collective</span>
<div class="dot" style="left:18px;top:237px;width:1px;height:15px;background-position:0px -1px;"></div>
<div class="dot" style="left:38px;top:237px;width:1px;height:15px;background-position:0px -1px;"></div>
<div class="dot" style="left:78px;top:237px;width:1px;height:15px;background-position:0px -1px;"></div>
<div class="dot" style="left:98px;top:237px;width:1px;height:3px;background-position:0px -1px;"></div>
<div class="dot" style="left:103px;top:244px;width:5px;height:1px;background-position:-1px 0px;"></div>
<div style="left:94px;top:240px;width:9px;height:9px;background:#808080;"></div>
<div style="left:95px;top:241px;width:7px;height:7px;background:#fff;"></div>
<div style="left:110px;top:239px;width:11px;height:11px;background:#000;"></div>
<div style="left:111px;top:240px;width:9px;height:9px;background:#fff;"></div>
<span class="t" style="left:128.3px;top:237px;height:15px;line-height:15px;color:#fff;font-size:13.5px;transform:scaleX(1.0566)">0.00</span>
<span class="t" style="left:160.0625px;top:237px;height:15px;line-height:15px;color:#fff;font-size:13.5px;transform:scaleX(1.0329)">One-sided</span>
<div class="dot" style="left:18px;top:252px;width:1px;height:15px;background-position:0px 0px;"></div>
<div class="dot" style="left:38px;top:252px;width:1px;height:15px;background-position:0px 0px;"></div>
<div class="dot" style="left:78px;top:252px;width:1px;height:3px;background-position:0px 0px;"></div>
<div class="dot" style="left:83px;top:259px;width:5px;height:1px;background-position:-1px -1px;"></div>
<div style="left:74px;top:255px;width:9px;height:9px;background:#808080;"></div>
<div style="left:75px;top:256px;width:7px;height:7px;background:#fff;"></div>
<div style="left:90px;top:254px;width:11px;height:11px;background:#000;"></div>
<div style="left:91px;top:255px;width:9px;height:9px;background:#fff;"></div>
<span class="t" style="left:108.3px;top:252px;height:15px;line-height:15px;color:#fff;font-size:13.5px;transform:scaleX(1.0566)">0.00</span>
<span class="t" style="left:140.0625px;top:252px;height:15px;line-height:15px;color:#fff;font-size:13.5px;transform:scaleX(0.9042)">File I/O</span>
<div class="dot" style="left:18px;top:267px;width:1px;height:15px;background-position:0px -1px;"></div>
<div class="dot" style="left:38px;top:267px;width:1px;height:8px;background-position:0px -1px;"></div>
<div class="dot" style="left:39px;top:274px;width:9px;height:1px;background-position:-1px 0px;"></div>
<div style="left:50px;top:269px;width:11px;height:11px;background:#000;"></div>
<div style="left:51px;top:270px;width:9px;height:9px;background:#fff;"></div>
<span class="t" style="left:68.3px;top:267px;height:15px;line-height:15px;color:#fff;font-size:13.5px;transform:scaleX(1.0566)">0.00</span>
<span class="t" style="left:100.0625px;top:267px;height:15px;line-height:15px;color:#fff;font-size:13.5px;transform:scaleX(1.0346)">Overhead</span>
<div class="dot" style="left:18px;top:282px;width:1px;height:8px;background-position:0px 0px;"></div>
<div class="dot" style="left:18px;top:290px;width:1px;height:7px;background-position:0px 0px;"></div>
<div class="dot" style="left:19px;top:289px;width:9px;height:1px;background-position:-1px -1px;"></div>
<div style="left:30px;top:284px;width:11px;height:11px;background:#000;"></div>
<div style="left:31px;top:285px;width:8px;height:8px;background:#fff;"></div>
<div style="left:32px;top:286px;width:7px;height:7px;background:#ff0000;"></div>
<span class="t" style="left:48.3px;top:282px;height:15px;line-height:15px;color:#000;font-size:13.5px;transform:scaleX(1.0542)">1.77e7</span>
<span class="t" style="left:95.828125px;top:282px;height:15px;line-height:15px;color:#000;font-size:13.5px;transform:scaleX(1.0662)">Visits (occ)</span>
<div class="dot" style="left:18px;top:297px;width:1px;height:3px;background-position:0px -1px;"></div>
<div class="dot" style="left:18px;top:309px;width:1px;height:3px;background-position:0px -1px;"></div>
<div class="dot" style="left:23px;top:304px;width:5px;height:1px;background-position:-1px 0px;"></div>
<div style="left:14px;top:300px;width:9px;height:9px;background:#808080;"></div>
<div style="left:15px;top:301px;width:7px;height:7px;background:#fff;"></div>
<div style="left:16px;top:304px;width:5px;height:1px;background:#000;"></div>
<div style="left:18px;top:302px;width:1px;height:5px;background:#000;"></div>
<div style="left:30px;top:299px;width:11px;height:11px;background:#000;"></div>
<div style="left:31px;top:300px;width:8px;height:8px;background:#fff;"></div>
<div style="left:32px;top:301px;width:7px;height:7px;background:#ff0000;"></div>
<span class="t" style="left:48.3px;top:297px;height:15px;line-height:15px;color:#000;font-size:13.5px;transform:scaleX(1.0542)">1.74e5</span>
<span class="t" style="left:95.828125px;top:297px;height:15px;line-height:15px;color:#000;font-size:13.5px;transform:scaleX(1.0464)">MPI synchronizations (occ)</span>
<div class="dot" style="left:18px;top:312px;width:1px;height:3px;background-position:0px 0px;"></div>
<div class="dot" style="left:18px;top:324px;width:1px;height:3px;background-position:0px 0px;"></div>
<div class="dot" style="left:23px;top:319px;width:5px;height:1px;background-position:-1px -1px;"></div>
<div style="left:14px;top:315px;width:9px;height:9px;background:#808080;"></div>
<div style="left:15px;top:316px;width:7px;height:7px;background:#fff;"></div>
<div style="left:16px;top:319px;width:5px;height:1px;background:#000;"></div>
<div style="left:18px;top:317px;width:1px;height:5px;background:#000;"></div>
<div style="left:30px;top:314px;width:11px;height:11px;background:#000;"></div>
<div style="left:31px;top:315px;width:9px;height:9px;background:#fff;"></div>
<span class="t" style="left:48.3px;top:312px;height:15px;line-height:15px;color:#000;font-size:13.5px;transform:scaleX(1.0276)">0</span>
<span class="t" style="left:60.015625px;top:312px;height:15px;line-height:15px;color:#000;font-size:13.5px;transform:scaleX(1.0439)">MPI pair-wise one-sided synchronizations (occ)</span>
<div class="dot" style="left:18px;top:327px;width:1px;height:3px;background-position:0px -1px;"></div>
<div class="dot" style="left:18px;top:339px;width:1px;height:3px;background-position:0px -1px;"></div>
<div class="dot" style="left:23px;top:334px;width:5px;height:1px;background-position:-1px 0px;"></div>
<div style="left:14px;top:330px;width:9px;height:9px;background:#808080;"></div>
<div style="left:15px;top:331px;width:7px;height:7px;background:#fff;"></div>
<div style="left:16px;top:334px;width:5px;height:1px;background:#000;"></div>
<div style="left:18px;top:332px;width:1px;height:5px;background:#000;"></div>
<div style="left:30px;top:329px;width:11px;height:11px;background:#000;"></div>
<div style="left:31px;top:330px;width:8px;height:8px;background:#fff;"></div>
<div style="left:32px;top:331px;width:7px;height:7px;background:#ff0000;"></div>
<span class="t" style="left:48.3px;top:327px;height:15px;line-height:15px;color:#000;font-size:13.5px;transform:scaleX(1.0542)">4.21e6</span>
<span class="t" style="left:95.828125px;top:327px;height:15px;line-height:15px;color:#000;font-size:13.5px;transform:scaleX(1.0568)">MPI communications (occ)</span>
<div class="dot" style="left:18px;top:342px;width:1px;height:3px;background-position:0px 0px;"></div>
<div class="dot" style="left:18px;top:354px;width:1px;height:3px;background-position:0px 0px;"></div>
<div class="dot" style="left:23px;top:349px;width:5px;height:1px;background-position:-1px -1px;"></div>
<div style="left:14px;top:345px;width:9px;height:9px;background:#808080;"></div>
<div style="left:15px;top:346px;width:7px;height:7px;background:#fff;"></div>
<div style="left:16px;top:349px;width:5px;height:1px;background:#000;"></div>
<div style="left:18px;top:347px;width:1px;height:5px;background:#000;"></div>
<div style="left:30px;top:344px;width:11px;height:11px;background:#000;"></div>
<div style="left:31px;top:345px;width:9px;height:9px;background:#fff;"></div>
<span class="t" style="left:48.3px;top:342px;height:15px;line-height:15px;color:#000;font-size:13.5px;transform:scaleX(1.0276)">0</span>
<span class="t" style="left:60.015625px;top:342px;height:15px;line-height:15px;color:#000;font-size:13.5px;transform:scaleX(1.0483)">MPI file operations (occ)</span>
<div class="dot" style="left:18px;top:357px;width:1px;height:3px;background-position:0px -1px;"></div>
<div class="dot" style="left:18px;top:369px;width:1px;height:3px;background-position:0px -1px;"></div>
<div class="dot" style="left:23px;top:364px;width:5px;height:1px;background-position:-1px 0px;"></div>
<div style="left:14px;top:360px;width:9px;height:9px;background:#808080;"></div>
<div style="left:15px;top:361px;width:7px;height:7px;background:#fff;"></div>
<div style="left:16px;top:364px;width:5px;height:1px;background:#000;"></div>
<div style="left:30px;top:359px;width:11px;height:11px;background:#000;"></div>
<div style="left:31px;top:360px;width:9px;height:9px;background:#fff;"></div>
<span class="t" style="left:48.3px;top:357px;height:15px;line-height:15px;color:#000;font-size:13.5px;transform:scaleX(1.0276)">0</span>
<span class="t" style="left:60.015625px;top:357px;height:15px;line-height:15px;color:#000;font-size:13.5px;transform:scaleX(1.0622)">MPI bytes transferred (bytes)</span>
<div class="dot" style="left:18px;top:372px;width:1px;height:15px;background-position:0px 0px;"></div>
<div class="dot" style="left:38px;top:372px;width:1px;height:3px;background-position:0px 0px;"></div>
<div class="dot" style="left:38px;top:384px;width:1px;height:3px;background-position:0px 0px;"></div>
<div class="dot" style="left:43px;top:379px;width:5px;height:1px;background-position:-1px -1px;"></div>
<div style="left:34px;top:375px;width:9px;height:9px;background:#808080;"></div>
<div style="left:35px;top:376px;width:7px;height:7px;background:#fff;"></div>
<div style="left:36px;top:379px;width:5px;height:1px;background:#000;"></div>
<div style="left:50px;top:374px;width:11px;height:11px;background:#000;"></div>
<div style="left:51px;top:375px;width:9px;height:9px;background:#fff;"></div>
<span class="t" style="left:68.3px;top:372px;height:15px;line-height:15px;color:#000;font-size:13.5px;transform:scaleX(1.0276)">0</span>
<span class="t" style="left:80.015625px;top:372px;height:15px;line-height:15px;color:#000;font-size:13.5px;transform:scaleX(1.0821)">Point-to-point</span>
<div class="dot" style="left:18px;top:387px;width:1px;height:15px;background-position:0px -1px;"></div>
<div class="dot" style="left:38px;top:387px;width:1px;height:15px;background-position:0px -1px;"></div>
<div class="dot" style="left:58px;top:387px;width:1px;height:8px;background-position:0px -1px;"></div>
<div class="dot" style="left:58px;top:395px;width:1px;height:7px;background-position:0px -1px;"></div>
<div class="dot" style="left:59px;top:394px;width:9px;height:1px;background-position:-1px 0px;"></div>
<div style="left:70px;top:389px;width:11px;height:11px;background:#000;"></div>
<div style="left:71px;top:390px;width:8px;height:8px;background:#fff;"></div>
<div style="left:72px;top:391px;width:7px;height:7px;background:#0000ff;"></div>
<span class="t" style="left:88.3px;top:387px;height:15px;line-height:15px;color:#000;font-size:13.5px;transform:scaleX(1.0542)">1.85e8</span>
<span class="t" style="left:135.828125px;top:387px;height:15px;line-height:15px;color:#000;font-size:13.5px;transform:scaleX(1.0828)">Sent</span>
<div class="dot" style="left:18px;top:402px;width:1px;height:15px;background-position:0px 0px;"></div>
<div class="dot" style="left:38px;top:402px;width:1px;height:15px;background-position:0px 0px;"></div>
<div class="dot" style="left:58px;top:402px;width:1px;height:8px;background-position:0px 0px;"></div>
<div class="dot" style="left:59px;top:409px;width:9px;height:1px;background-position:-1px -1px;"></div>
<div style="left:70px;top:404px;width:11px;height:11px;background:#000;"></div>
<div style="left:71px;top:405px;width:8px;height:8px;background:#fff;"></div>
<div style="left:72px;top:406px;width:7px;height:7px;background:#0000ff;"></div>
<span class="t" style="left:88.3px;top:402px;height:15px;line-height:15px;color:#000;font-size:13.5px;transform:scaleX(1.0542)">1.85e8</span>
<span class="t" style="left:135.828125px;top:402px;height:15px;line-height:15px;color:#000;font-size:13.5px;transform:scaleX(1.0087)">Received</span>
<div class="dot" style="left:18px;top:417px;width:1px;height:15px;background-position:0px -1px;"></div>
<div class="dot" style="left:38px;top:417px;width:1px;height:3px;background-position:0px -1px;"></div>
<div class="dot" style="left:38px;top:429px;width:1px;height:3px;background-position:0px -1px;"></div>
<div class="dot" style="left:43px;top:424px;width:5px;height:1px;background-position:-1px 0px;"></div>
<div style="left:34px;top:420px;width:9px;height:9px;background:#808080;"></div>
<div style="left:35px;top:421px;width:7px;height:7px;background:#fff;"></div>
<div style="left:36px;top:424px;width:5px;height:1px;background:#000;"></div>
<div style="left:50px;top:419px;width:11px;height:11px;background:#000;"></div>
<div style="left:51px;top:420px;width:9px;height:9px;background:#fff;"></div>
<span class="t" style="left:68.3px;top:417px;height:15px;line-height:15px;color:#000;font-size:13.5px;transform:scaleX(1.0276)">0</span>
<span class="t" style="left:80.015625px;top:417px;height:15px;line-height:15px;color:#000;font-size:13.5px;transform:scaleX(1.0387)">Collective</span>
<div class="dot" style="left:18px;top:432px;width:1px;height:15px;background-position:0px 0px;"></div>
<div class="dot" style="left:38px;top:432px;width:1px;height:15px;background-position:0px 0px;"></div>
<div class="dot" style="left:58px;top:432px;width:1px;height:8px;background-position:0px 0px;"></div>
<div class="dot" style="left:58px;top:440px;width:1px;height:7px;background-position:0px 0px;"></div>
<div class="dot" style="left:59px;top:439px;width:9px;height:1px;background-position:-1px -1px;"></div>
<div style="left:70px;top:434px;width:11px;height:11px;background:#000;"></div>
<div style="left:71px;top:435px;width:8px;height:8px;background:#fff;"></div>
<div style="left:72px;top:436px;width:7px;height:7px;background:#ffcc00;"></div>
<span class="t" style="left:88.3px;top:432px;height:15px;line-height:15px;color:#000;font-size:13.5px;transform:scaleX(1.0562)">1.17e11</span>
<span class="t" style="left:143.84375px;top:432px;height:15px;line-height:15px;color:#000;font-size:13.5px;transform:scaleX(1.0651)">Outgoing</span>
<div class="dot" style="left:18px;top:447px;width:1px;height:15px;background-position:0px -1px;"></div>
<div class="dot" style="left:38px;top:447px;width:1px;height:15px;background-position:0px -1px;"></div>
<div class="dot" style="left:58px;top:447px;width:1px;height:8px;background-position:0px -1px;"></div>
<div class="dot" style="left:59px;top:454px;width:9px;height:1px;background-position:-1px 0px;"></div>
<div style="left:70px;top:449px;width:11px;height:11px;background:#000;"></div>
<div style="left:71px;top:450px;width:8px;height:8px;background:#fff;"></div>
<div style="left:72px;top:451px;width:7px;height:7px;background:#ffcc00;"></div>
<span class="t" style="left:88.3px;top:447px;height:15px;line-height:15px;color:#000;font-size:13.5px;transform:scaleX(1.0562)">1.17e11</span>
<span class="t" style="left:143.84375px;top:447px;height:15px;line-height:15px;color:#000;font-size:13.5px;transform:scaleX(1.0653)">Incoming</span>
<div class="dot" style="left:18px;top:462px;width:1px;height:15px;background-position:0px 0px;"></div>
<div class="dot" style="left:38px;top:462px;width:1px;height:3px;background-position:0px 0px;"></div>
<div class="dot" style="left:43px;top:469px;width:5px;height:1px;background-position:-1px -1px;"></div>
<div style="left:34px;top:465px;width:9px;height:9px;background:#808080;"></div>
<div style="left:35px;top:466px;width:7px;height:7px;background:#fff;"></div>
<div style="left:36px;top:469px;width:5px;height:1px;background:#000;"></div>
<div style="left:38px;top:467px;width:1px;height:5px;background:#000;"></div>
<div style="left:50px;top:464px;width:11px;height:11px;background:#000;"></div>
<div style="left:51px;top:465px;width:9px;height:9px;background:#fff;"></div>
<span class="t" style="left:68.3px;top:462px;height:15px;line-height:15px;color:#000;font-size:13.5px;transform:scaleX(1.0276)">0</span>
<span class="t" style="left:80.015625px;top:462px;height:15px;line-height:15px;color:#000;font-size:13.5px;transform:scaleX(1.0465)">One-sided</span>
<div class="dot" style="left:18px;top:477px;width:1px;height:3px;background-position:0px -1px;"></div>
<div class="dot" style="left:18px;top:489px;width:1px;height:3px;background-position:0px -1px;"></div>
<div class="dot" style="left:23px;top:484px;width:5px;height:1px;background-position:-1px 0px;"></div>
<div style="left:14px;top:480px;width:9px;height:9px;background:#808080;"></div>
<div style="left:15px;top:481px;width:7px;height:7px;background:#fff;"></div>
<div style="left:16px;top:484px;width:5px;height:1px;background:#000;"></div>
<div style="left:18px;top:482px;width:1px;height:5px;background:#000;"></div>
<div style="left:30px;top:479px;width:11px;height:11px;background:#000;"></div>
<div style="left:31px;top:480px;width:8px;height:8px;background:#fff;"></div>
<div style="left:32px;top:481px;width:7px;height:7px;background:#ff0000;"></div>
<span class="t" style="left:48.3px;top:477px;height:15px;line-height:15px;color:#000;font-size:13.5px;transform:scaleX(1.0617)">1523.18</span>
<span class="t" style="left:104.109375px;top:477px;height:15px;line-height:15px;color:#000;font-size:13.5px;transform:scaleX(1.0644)">Delay costs (sec)</span>
<div class="dot" style="left:18px;top:492px;width:1px;height:3px;background-position:0px 0px;"></div>
<div class="dot" style="left:18px;top:504px;width:1px;height:3px;background-position:0px 0px;"></div>
<div class="dot" style="left:23px;top:499px;width:5px;height:1px;background-position:-1px -1px;"></div>
<div style="left:14px;top:495px;width:9px;height:9px;background:#808080;"></div>
<div style="left:15px;top:496px;width:7px;height:7px;background:#fff;"></div>
<div style="left:16px;top:499px;width:5px;height:1px;background:#000;"></div>
<div style="left:18px;top:497px;width:1px;height:5px;background:#000;"></div>
<div style="left:30px;top:494px;width:11px;height:11px;background:#000;"></div>
<div style="left:31px;top:495px;width:8px;height:8px;background:#fff;"></div>
<div style="left:32px;top:496px;width:7px;height:7px;background:#ff0000;"></div>
<span class="t" style="left:48.3px;top:492px;height:15px;line-height:15px;color:#000;font-size:13.5px;transform:scaleX(1.0566)">4.55</span>
<span class="t" style="left:80.0625px;top:492px;height:15px;line-height:15px;color:#000;font-size:13.5px;transform:scaleX(1.0751)">MPI point-to-point wait states (propagating vs. terminal) (sec)</span>
<div class="dot" style="left:18px;top:507px;width:1px;height:3px;background-position:0px -1px;"></div>
<div class="dot" style="left:18px;top:519px;width:1px;height:3px;background-position:0px -1px;"></div>
<div class="dot" style="left:23px;top:514px;width:5px;height:1px;background-position:-1px 0px;"></div>
<div style="left:14px;top:510px;width:9px;height:9px;background:#808080;"></div>
<div style="left:15px;top:511px;width:7px;height:7px;background:#fff;"></div>
<div style="left:16px;top:514px;width:5px;height:1px;background:#000;"></div>
<div style="left:18px;top:512px;width:1px;height:5px;background:#000;"></div>
<div style="left:30px;top:509px;width:11px;height:11px;background:#000;"></div>
<div style="left:31px;top:510px;width:8px;height:8px;background:#fff;"></div>
<div style="left:32px;top:511px;width:7px;height:7px;background:#ff0000;"></div>
<span class="t" style="left:48.3px;top:507px;height:15px;line-height:15px;color:#000;font-size:13.5px;transform:scaleX(1.0566)">4.55</span>
<span class="t" style="left:80.0625px;top:507px;height:15px;line-height:15px;color:#000;font-size:13.5px;transform:scaleX(1.0730)">MPI point-to-point wait states (direct vs. indirect) (sec)</span>
<div class="dot" style="left:18px;top:522px;width:1px;height:3px;background-position:0px 0px;"></div>
<div class="dot" style="left:18px;top:534px;width:1px;height:3px;background-position:0px 0px;"></div>
<div class="dot" style="left:23px;top:529px;width:5px;height:1px;background-position:-1px -1px;"></div>
<div style="left:14px;top:525px;width:9px;height:9px;background:#808080;"></div>
<div style="left:15px;top:526px;width:7px;height:7px;background:#fff;"></div>
<div style="left:16px;top:529px;width:5px;height:1px;background:#000;"></div>
<div style="left:18px;top:527px;width:1px;height:5px;background:#000;"></div>
<div style="left:30px;top:524px;width:11px;height:11px;background:#000;"></div>
<div style="left:31px;top:525px;width:8px;height:8px;background:#fff;"></div>
<div style="left:32px;top:526px;width:7px;height:7px;background:#ff0000;"></div>
<span class="t" style="left:48.3px;top:522px;height:15px;line-height:15px;color:#000;font-size:13.5px;transform:scaleX(1.0606)">839.16</span>
<span class="t" style="left:96.09375px;top:522px;height:15px;line-height:15px;color:#000;font-size:13.5px;transform:scaleX(1.0684)">Critical path (sec)</span>
<div class="dot" style="left:18px;top:537px;width:1px;height:3px;background-position:0px -1px;"></div>
<div class="dot" style="left:18px;top:549px;width:1px;height:3px;background-position:0px -1px;"></div>
<div class="dot" style="left:23px;top:544px;width:5px;height:1px;background-position:-1px 0px;"></div>
<div style="left:14px;top:540px;width:9px;height:9px;background:#808080;"></div>
<div style="left:15px;top:541px;width:7px;height:7px;background:#fff;"></div>
<div style="left:16px;top:544px;width:5px;height:1px;background:#000;"></div>
<div style="left:18px;top:542px;width:1px;height:5px;background:#000;"></div>
<div style="left:30px;top:539px;width:11px;height:11px;background:#000;"></div>
<div style="left:31px;top:540px;width:8px;height:8px;background:#fff;"></div>
<div style="left:32px;top:541px;width:7px;height:7px;background:#ff0000;"></div>
<span class="t" style="left:48.3px;top:537px;height:15px;line-height:15px;color:#000;font-size:13.5px;transform:scaleX(1.0617)">6713.32</span>
<span class="t" style="left:104.109375px;top:537px;height:15px;line-height:15px;color:#000;font-size:13.5px;transform:scaleX(1.0760)">Performance impact (sec)</span>
<div class="dot" style="left:18px;top:552px;width:1px;height:3px;background-position:0px 0px;"></div>
<div class="dot" style="left:23px;top:559px;width:5px;height:1px;background-position:-1px -1px;"></div>
<div style="left:14px;top:555px;width:9px;height:9px;background:#808080;"></div>
<div style="left:15px;top:556px;width:7px;height:7px;background:#fff;"></div>
<div style="left:16px;top:559px;width:5px;height:1px;background:#000;"></div>
<div style="left:18px;top:557px;width:1px;height:5px;background:#000;"></div>
<div style="left:30px;top:554px;width:11px;height:11px;background:#000;"></div>
<div style="left:31px;top:555px;width:8px;height:8px;background:#fff;"></div>
<div style="left:32px;top:556px;width:7px;height:7px;background:#ff0000;"></div>
<span class="t" style="left:48.3px;top:552px;height:15px;line-height:15px;color:#000;font-size:13.5px;transform:scaleX(1.0606)">688.63</span>
<span class="t" style="left:96.09375px;top:552px;height:15px;line-height:15px;color:#000;font-size:13.5px;transform:scaleX(1.0759)">Computational imbalance (sec)</span>
<div style="left:544px;top:102px;width:99px;height:15px;background:#000080;"></div>
<div class="dot" style="left:534px;top:102px;width:1px;height:3px;background-position:0px 0px;"></div>
<div class="dot" style="left:539px;top:109px;width:5px;height:1px;background-position:-1px -1px;"></div>
<div style="left:530px;top:105px;width:9px;height:9px;background:#808080;"></div>
<div style="left:531px;top:106px;width:7px;height:7px;background:#fff;"></div>
<div style="left:532px;top:109px;width:5px;height:1px;background:#000;"></div>
<div style="left:546px;top:104px;width:11px;height:11px;background:#000;"></div>
<div style="left:547px;top:105px;width:8px;height:8px;background:#fff;"></div>
<div style="left:548px;top:106px;width:7px;height:7px;background:#0000ff;"></div>
<span class="t" style="left:564.3px;top:102px;height:15px;line-height:15px;color:#fff;font-size:13.5px;transform:scaleX(1.0566)">0.96</span>
<span class="t" style="left:596.0625px;top:102px;height:15px;line-height:15px;color:#fff;font-size:13.5px;transform:scaleX(0.9848)">MAIN</span>
<div class="dot" style="left:554px;top:117px;width:1px;height:3px;background-position:0px -1px;"></div>
<div class="dot" style="left:554px;top:129px;width:1px;height:3px;background-position:0px -1px;"></div>
<div class="dot" style="left:559px;top:124px;width:5px;height:1px;background-position:-1px 0px;"></div>
<div style="left:550px;top:120px;width:9px;height:9px;background:#808080;"></div>
<div style="left:551px;top:121px;width:7px;height:7px;background:#fff;"></div>
<div style="left:566px;top:119px;width:11px;height:11px;background:#000;"></div>
<div style="left:567px;top:120px;width:8px;height:8px;background:#fff;"></div>
<div style="left:568px;top:121px;width:7px;height:7px;background:#0000ff;"></div>
<span class="t" style="left:584.3px;top:117px;height:15px;line-height:15px;color:#000;font-size:13.5px;transform:scaleX(1.0566)">0.85</span>
<span class="t" style="left:616.0625px;top:117px;height:15px;line-height:15px;color:#000;font-size:13.5px;transform:scaleX(1.0542)">ppinit_</span>
<div class="dot" style="left:554px;top:132px;width:1px;height:3px;background-position:0px 0px;"></div>
<div class="dot" style="left:554px;top:144px;width:1px;height:3px;background-position:0px 0px;"></div>
<div class="dot" style="left:559px;top:139px;width:5px;height:1px;background-position:-1px -1px;"></div>
<div style="left:550px;top:135px;width:9px;height:9px;background:#808080;"></div>
<div style="left:551px;top:136px;width:7px;height:7px;background:#fff;"></div>
<div style="left:552px;top:139px;width:5px;height:1px;background:#000;"></div>
<div style="left:554px;top:137px;width:1px;height:5px;background:#000;"></div>
<div style="left:566px;top:134px;width:11px;height:11px;background:#000;"></div>
<div style="left:567px;top:135px;width:8px;height:8px;background:#fff;"></div>
<div style="left:568px;top:136px;width:7px;height:7px;background:#0028ff;"></div>
<span class="t" style="left:584.3px;top:132px;height:15px;line-height:15px;color:#000;font-size:13.5px;transform:scaleX(1.0591)">73.82</span>
<span class="t" style="left:624.078125px;top:132px;height:15px;line-height:15px;color:#000;font-size:13.5px;transform:scaleX(1.0387)">ctl_</span>
<div class="dot" style="left:554px;top:147px;width:1px;height:3px;background-position:0px -1px;"></div>
<div class="dot" style="left:554px;top:159px;width:1px;height:3px;background-position:0px -1px;"></div>
<div class="dot" style="left:559px;top:154px;width:5px;height:1px;background-position:-1px 0px;"></div>
<div style="left:550px;top:150px;width:9px;height:9px;background:#808080;"></div>
<div style="left:551px;top:151px;width:7px;height:7px;background:#fff;"></div>
<div style="left:552px;top:154px;width:5px;height:1px;background:#000;"></div>
<div style="left:554px;top:152px;width:1px;height:5px;background:#000;"></div>
<div style="left:566px;top:149px;width:11px;height:11px;background:#000;"></div>
<div style="left:567px;top:150px;width:8px;height:8px;background:#fff;"></div>
<div style="left:568px;top:151px;width:7px;height:7px;background:#0000ff;"></div>
<span class="t" style="left:584.3px;top:147px;height:15px;line-height:15px;color:#000;font-size:13.5px;transform:scaleX(1.0566)">0.19</span>
<span class="t" style="left:616.0625px;top:147px;height:15px;line-height:15px;color:#000;font-size:13.5px;transform:scaleX(1.0889)">inputt_</span>
<div class="dot" style="left:554px;top:162px;width:1px;height:3px;background-position:0px 0px;"></div>
<div class="dot" style="left:554px;top:174px;width:1px;height:3px;background-position:0px 0px;"></div>
<div class="dot" style="left:559px;top:169px;width:5px;height:1px;background-position:-1px -1px;"></div>
<div style="left:550px;top:165px;width:9px;height:9px;background:#808080;"></div>
<div style="left:551px;top:166px;width:7px;height:7px;background:#fff;"></div>
<div style="left:552px;top:169px;width:5px;height:1px;background:#000;"></div>
<div style="left:554px;top:167px;width:1px;height:5px;background:#000;"></div>
<div style="left:566px;top:164px;width:11px;height:11px;background:#000;"></div>
<div style="left:567px;top:165px;width:8px;height:8px;background:#fff;"></div>
<div style="left:568px;top:166px;width:7px;height:7px;background:#0000ff;"></div>
<span class="t" style="left:584.3px;top:162px;height:15px;line-height:15px;color:#000;font-size:13.5px;transform:scaleX(1.0566)">0.16</span>
<span class="t" style="left:616.0625px;top:162px;height:15px;line-height:15px;color:#000;font-size:13.5px;transform:scaleX(1.0601)">initwithinput_</span>
<div class="dot" style="left:554px;top:177px;width:1px;height:3px;background-position:0px -1px;"></div>
<div class="dot" style="left:554px;top:189px;width:1px;height:3px;background-position:0px -1px;"></div>
<div class="dot" style="left:559px;top:184px;width:5px;height:1px;background-position:-1px 0px;"></div>
<div style="left:550px;top:180px;width:9px;height:9px;background:#808080;"></div>
<div style="left:551px;top:181px;width:7px;height:7px;background:#fff;"></div>
<div style="left:552px;top:184px;width:5px;height:1px;background:#000;"></div>
<div style="left:554px;top:182px;width:1px;height:5px;background:#000;"></div>
<div style="left:566px;top:179px;width:11px;height:11px;background:#000;"></div>
<div style="left:567px;top:180px;width:8px;height:8px;background:#fff;"></div>
<div style="left:568px;top:181px;width:7px;height:7px;background:#0000ff;"></div>
<span class="t" style="left:584.3px;top:177px;height:15px;line-height:15px;color:#000;font-size:13.5px;transform:scaleX(1.0566)">0.01</span>
<span class="t" style="left:616.0625px;top:177px;height:15px;line-height:15px;color:#000;font-size:13.5px;transform:scaleX(1.0783)">atomicdistancetablemodule.checkatomicdistances_</span>
<div class="dot" style="left:554px;top:192px;width:1px;height:3px;background-position:0px 0px;"></div>
<div class="dot" style="left:554px;top:204px;width:1px;height:3px;background-position:0px 0px;"></div>
<div class="dot" style="left:559px;top:199px;width:5px;height:1px;background-position:-1px -1px;"></div>
<div style="left:550px;top:195px;width:9px;height:9px;background:#808080;"></div>
<div style="left:551px;top:196px;width:7px;height:7px;background:#fff;"></div>
<div style="left:552px;top:199px;width:5px;height:1px;background:#000;"></div>
<div style="left:554px;top:197px;width:1px;height:5px;background:#000;"></div>
<div style="left:566px;top:194px;width:11px;height:11px;background:#000;"></div>
<div style="left:567px;top:195px;width:8px;height:8px;background:#fff;"></div>
<div style="left:568px;top:196px;width:7px;height:7px;background:#0000ff;"></div>
<span class="t" style="left:584.3px;top:192px;height:15px;line-height:15px;color:#000;font-size:13.5px;transform:scaleX(1.0566)">0.02</span>
<span class="t" style="left:616.0625px;top:192px;height:15px;line-height:15px;color:#000;font-size:13.5px;transform:scaleX(1.0648)">locksharedarraymodule.initsharedarraylocker_</span>
<div class="dot" style="left:554px;top:207px;width:1px;height:3px;background-position:0px -1px;"></div>
<div class="dot" style="left:554px;top:219px;width:1px;height:3px;background-position:0px -1px;"></div>
<div class="dot" style="left:559px;top:214px;width:5px;height:1px;background-position:-1px 0px;"></div>
<div style="left:550px;top:210px;width:9px;height:9px;background:#808080;"></div>
<div style="left:551px;top:211px;width:7px;height:7px;background:#fff;"></div>
<div style="left:552px;top:214px;width:5px;height:1px;background:#000;"></div>
<div style="left:554px;top:212px;width:1px;height:5px;background:#000;"></div>
<div style="left:566px;top:209px;width:11px;height:11px;background:#000;"></div>
<div style="left:567px;top:210px;width:8px;height:8px;background:#fff;"></div>
<div style="left:568px;top:211px;width:7px;height:7px;background:#0000ff;"></div>
<span class="t" style="left:584.3px;top:207px;height:15px;line-height:15px;color:#000;font-size:13.5px;transform:scaleX(1.0566)">5.80</span>
<span class="t" style="left:616.0625px;top:207px;height:15px;line-height:15px;color:#000;font-size:13.5px;transform:scaleX(1.0576)">radialmodule.easyradial_</span>
<div class="dot" style="left:554px;top:222px;width:1px;height:3px;background-position:0px 0px;"></div>
<div class="dot" style="left:559px;top:229px;width:5px;height:1px;background-position:-1px -1px;"></div>
<div style="left:550px;top:225px;width:9px;height:9px;background:#808080;"></div>
<div style="left:551px;top:226px;width:7px;height:7px;background:#fff;"></div>
<div style="left:552px;top:229px;width:5px;height:1px;background:#000;"></div>
<div style="left:566px;top:224px;width:11px;height:11px;background:#000;"></div>
<div style="left:567px;top:225px;width:8px;height:8px;background:#fff;"></div>
<div style="left:568px;top:226px;width:7px;height:7px;background:#0000ff;"></div>
<span class="t" style="left:584.3px;top:222px;height:15px;line-height:15px;color:#000;font-size:13.5px;transform:scaleX(1.0566)">1.75</span>
<span class="t" style="left:616.0625px;top:222px;height:15px;line-height:15px;color:#000;font-size:13.5px;transform:scaleX(1.0629)">banddmodule.bandd_</span>
<div class="dot" style="left:574px;top:237px;width:1px;height:3px;background-position:0px -1px;"></div>
<div class="dot" style="left:574px;top:249px;width:1px;height:3px;background-position:0px -1px;"></div>
<div class="dot" style="left:579px;top:244px;width:5px;height:1px;background-position:-1px 0px;"></div>
<div style="left:570px;top:240px;width:9px;height:9px;background:#808080;"></div>
<div style="left:571px;top:241px;width:7px;height:7px;background:#fff;"></div>
<div style="left:572px;top:244px;width:5px;height:1px;background:#000;"></div>
<div style="left:574px;top:242px;width:1px;height:5px;background:#000;"></div>
<div style="left:586px;top:239px;width:11px;height:11px;background:#000;"></div>
<div style="left:587px;top:240px;width:8px;height:8px;background:#fff;"></div>
<div style="left:588px;top:241px;width:7px;height:7px;background:#0000ff;"></div>
<span class="t" style="left:604.3px;top:237px;height:15px;line-height:15px;color:#000;font-size:13.5px;transform:scaleX(1.0566)">0.01</span>
<span class="t" style="left:636.0625px;top:237px;height:15px;line-height:15px;color:#000;font-size:13.5px;transform:scaleX(1.0858)">banddmodule.mapatomstounitcell_</span>
<div class="dot" style="left:574px;top:252px;width:1px;height:8px;background-position:0px 0px;"></div>
<div class="dot" style="left:574px;top:260px;width:1px;height:7px;background-position:0px 0px;"></div>
<div class="dot" style="left:575px;top:259px;width:9px;height:1px;background-position:-1px -1px;"></div>
<div style="left:586px;top:254px;width:11px;height:11px;background:#000;"></div>
<div style="left:587px;top:255px;width:8px;height:8px;background:#fff;"></div>
<div style="left:588px;top:256px;width:7px;height:7px;background:#0000ff;"></div>
<span class="t" style="left:604.3px;top:252px;height:15px;line-height:15px;color:#000;font-size:13.5px;transform:scaleX(1.0566)">0.00</span>
<span class="t" style="left:636.0625px;top:252px;height:15px;line-height:15px;color:#000;font-size:13.5px;transform:scaleX(1.0442)">ctl_</span>
<div class="dot" style="left:574px;top:267px;width:1px;height:3px;background-position:0px -1px;"></div>
<div class="dot" style="left:574px;top:279px;width:1px;height:3px;background-position:0px -1px;"></div>
<div class="dot" style="left:579px;top:274px;width:5px;height:1px;background-position:-1px 0px;"></div>
<div style="left:570px;top:270px;width:9px;height:9px;background:#808080;"></div>
<div style="left:571px;top:271px;width:7px;height:7px;background:#fff;"></div>
<div style="left:572px;top:274px;width:5px;height:1px;background:#000;"></div>
<div style="left:574px;top:272px;width:1px;height:5px;background:#000;"></div>
<div style="left:586px;top:269px;width:11px;height:11px;background:#000;"></div>
<div style="left:587px;top:270px;width:8px;height:8px;background:#fff;"></div>
<div style="left:588px;top:271px;width:7px;height:7px;background:#0000ff;"></div>
<span class="t" style="left:604.3px;top:267px;height:15px;line-height:15px;color:#000;font-size:13.5px;transform:scaleX(1.0566)">4.99</span>
<span class="t" style="left:636.0625px;top:267px;height:15px;line-height:15px;color:#000;font-size:13.5px;transform:scaleX(1.0933)">gemtrymodule.gemtry_</span>
<div class="dot" style="left:574px;top:282px;width:1px;height:3px;background-position:0px 0px;"></div>
<div class="dot" style="left:574px;top:294px;width:1px;height:3px;background-position:0px 0px;"></div>
<div class="dot" style="left:579px;top:289px;width:5px;height:1px;background-position:-1px -1px;"></div>
<div style="left:570px;top:285px;width:9px;height:9px;background:#808080;"></div>
<div style="left:571px;top:286px;width:7px;height:7px;background:#fff;"></div>
<div style="left:572px;top:289px;width:5px;height:1px;background:#000;"></div>
<div style="left:574px;top:287px;width:1px;height:5px;background:#000;"></div>
<div style="left:586px;top:284px;width:11px;height:11px;background:#000;"></div>
<div style="left:587px;top:285px;width:8px;height:8px;background:#fff;"></div>
<div style="left:588px;top:286px;width:7px;height:7px;background:#0084ff;"></div>
<span class="t" style="left:604.3px;top:282px;height:15px;line-height:15px;color:#000;font-size:13.5px;transform:scaleX(1.0606)">233.57</span>
<span class="t" style="left:652.09375px;top:282px;height:15px;line-height:15px;color:#000;font-size:13.5px;transform:scaleX(1.0698)">preparmodule.prepar_</span>
<div class="dot" style="left:574px;top:297px;width:1px;height:3px;background-position:0px -1px;"></div>
<div class="dot" style="left:574px;top:309px;width:1px;height:3px;background-position:0px -1px;"></div>
<div class="dot" style="left:579px;top:304px;width:5px;height:1px;background-position:-1px 0px;"></div>
<div style="left:570px;top:300px;width:9px;height:9px;background:#808080;"></div>
<div style="left:571px;top:301px;width:7px;height:7px;background:#fff;"></div>
<div style="left:572px;top:304px;width:5px;height:1px;background:#000;"></div>
<div style="left:574px;top:302px;width:1px;height:5px;background:#000;"></div>
<div style="left:586px;top:299px;width:11px;height:11px;background:#000;"></div>
<div style="left:587px;top:300px;width:8px;height:8px;background:#fff;"></div>
<div style="left:588px;top:301px;width:7px;height:7px;background:#0000ff;"></div>
<span class="t" style="left:604.3px;top:297px;height:15px;line-height:15px;color:#000;font-size:13.5px;transform:scaleX(1.0566)">0.12</span>
<span class="t" style="left:636.0625px;top:297px;height:15px;line-height:15px;color:#000;font-size:13.5px;transform:scaleX(1.0727)">pmatrixhistorymodule.newprivate_</span>
<div class="dot" style="left:574px;top:312px;width:1px;height:3px;background-position:0px 0px;"></div>
<div class="dot" style="left:574px;top:324px;width:1px;height:3px;background-position:0px 0px;"></div>
<div class="dot" style="left:579px;top:319px;width:5px;height:1px;background-position:-1px -1px;"></div>
<div style="left:570px;top:315px;width:9px;height:9px;background:#808080;"></div>
<div style="left:571px;top:316px;width:7px;height:7px;background:#fff;"></div>
<div style="left:572px;top:319px;width:5px;height:1px;background:#000;"></div>
<div style="left:586px;top:314px;width:11px;height:11px;background:#000;"></div>
<div style="left:587px;top:315px;width:8px;height:8px;background:#fff;"></div>
<div style="left:588px;top:316px;width:7px;height:7px;background:#0000ff;"></div>
<span class="t" style="left:604.3px;top:312px;height:15px;line-height:15px;color:#000;font-size:13.5px;transform:scaleX(1.0566)">1.24</span>
<span class="t" style="left:636.0625px;top:312px;height:15px;line-height:15px;color:#000;font-size:13.5px;transform:scaleX(1.0566)">scfmodule.scf_</span>
<div class="dot" style="left:574px;top:327px;width:1px;height:15px;background-position:0px -1px;"></div>
<div class="dot" style="left:594px;top:327px;width:1px;height:3px;background-position:0px -1px;"></div>
<div class="dot" style="left:594px;top:339px;width:1px;height:3px;background-position:0px -1px;"></div>
<div class="dot" style="left:599px;top:334px;width:5px;height:1px;background-position:-1px 0px;"></div>
<div style="left:590px;top:330px;width:9px;height:9px;background:#808080;"></div>
<div style="left:591px;top:331px;width:7px;height:7px;background:#fff;"></div>
<div style="left:592px;top:334px;width:5px;height:1px;background:#000;"></div>
<div style="left:594px;top:332px;width:1px;height:5px;background:#000;"></div>
<div style="left:606px;top:329px;width:11px;height:11px;background:#000;"></div>
<div style="left:607px;top:330px;width:8px;height:8px;background:#fff;"></div>
<div style="left:608px;top:331px;width:7px;height:7px;background:#0000ff;"></div>
<span class="t" style="left:624.3px;top:327px;height:15px;line-height:15px;color:#000;font-size:13.5px;transform:scaleX(1.0566)">0.01</span>
<span class="t" style="left:656.0625px;top:327px;height:15px;line-height:15px;color:#000;font-size:13.5px;transform:scaleX(1.0689)">kspaceintegratormodule.newprivate_</span>
<div class="dot" style="left:574px;top:342px;width:1px;height:15px;background-position:0px 0px;"></div>
<div class="dot" style="left:594px;top:342px;width:1px;height:3px;background-position:0px 0px;"></div>
<div class="dot" style="left:594px;top:354px;width:1px;height:3px;background-position:0px 0px;"></div>
<div class="dot" style="left:599px;top:349px;width:5px;height:1px;background-position:-1px -1px;"></div>
<div style="left:590px;top:345px;width:9px;height:9px;background:#808080;"></div>
<div style="left:591px;top:346px;width:7px;height:7px;background:#fff;"></div>
<div style="left:592px;top:349px;width:5px;height:1px;background:#000;"></div>
<div style="left:594px;top:347px;width:1px;height:5px;background:#000;"></div>
<div style="left:606px;top:344px;width:11px;height:11px;background:#000;"></div>
<div style="left:607px;top:345px;width:8px;height:8px;background:#fff;"></div>
<div style="left:608px;top:346px;width:7px;height:7px;background:#0000ff;"></div>
<span class="t" style="left:624.3px;top:342px;height:15px;line-height:15px;color:#000;font-size:13.5px;transform:scaleX(1.0566)">0.00</span>
<span class="t" style="left:656.0625px;top:342px;height:15px;line-height:15px;color:#000;font-size:13.5px;transform:scaleX(1.0726)">kspaceintegratormodule.getfulloccupations_</span>
<div class="dot" style="left:574px;top:357px;width:1px;height:15px;background-position:0px -1px;"></div>
<div class="dot" style="left:594px;top:357px;width:1px;height:3px;background-position:0px -1px;"></div>
<div class="dot" style="left:594px;top:369px;width:1px;height:3px;background-position:0px -1px;"></div>
<div class="dot" style="left:599px;top:364px;width:5px;height:1px;background-position:-1px 0px;"></div>
<div style="left:590px;top:360px;width:9px;height:9px;background:#808080;"></div>
<div style="left:591px;top:361px;width:7px;height:7px;background:#fff;"></div>
<div style="left:592px;top:364px;width:5px;height:1px;background:#000;"></div>
<div style="left:594px;top:362px;width:1px;height:5px;background:#000;"></div>
<div style="left:606px;top:359px;width:11px;height:11px;background:#000;"></div>
<div style="left:607px;top:360px;width:8px;height:8px;background:#fff;"></div>
<div style="left:608px;top:361px;width:7px;height:7px;background:#0000ff;"></div>
<span class="t" style="left:624.3px;top:357px;height:15px;line-height:15px;color:#000;font-size:13.5px;transform:scaleX(1.0566)">1.06</span>
<span class="t" style="left:656.0625px;top:357px;height:15px;line-height:15px;color:#000;font-size:13.5px;transform:scaleX(1.0779)">initialeigensystemmodule.makeinitialeigensystem_</span>
<div class="dot" style="left:574px;top:372px;width:1px;height:15px;background-position:0px 0px;"></div>
<div class="dot" style="left:594px;top:372px;width:1px;height:3px;background-position:0px 0px;"></div>
<div class="dot" style="left:594px;top:384px;width:1px;height:3px;background-position:0px 0px;"></div>
<div class="dot" style="left:599px;top:379px;width:5px;height:1px;background-position:-1px -1px;"></div>
<div style="left:590px;top:375px;width:9px;height:9px;background:#808080;"></div>
<div style="left:591px;top:376px;width:7px;height:7px;background:#fff;"></div>
<div style="left:592px;top:379px;width:5px;height:1px;background:#000;"></div>
<div style="left:594px;top:377px;width:1px;height:5px;background:#000;"></div>
<div style="left:606px;top:374px;width:11px;height:11px;background:#000;"></div>
<div style="left:607px;top:375px;width:8px;height:8px;background:#fff;"></div>
<div style="left:608px;top:376px;width:7px;height:7px;background:#0000ff;"></div>
<span class="t" style="left:624.3px;top:372px;height:15px;line-height:15px;color:#000;font-size:13.5px;transform:scaleX(1.0566)">0.16</span>
<span class="t" style="left:656.0625px;top:372px;height:15px;line-height:15px;color:#000;font-size:13.5px;transform:scaleX(1.0898)">eigensystemiteratormodule.converteigsystopmatiter2_</span>
<div class="dot" style="left:574px;top:387px;width:1px;height:15px;background-position:0px -1px;"></div>
<div class="dot" style="left:594px;top:387px;width:1px;height:3px;background-position:0px -1px;"></div>
<div class="dot" style="left:594px;top:399px;width:1px;height:3px;background-position:0px -1px;"></div>
<div class="dot" style="left:599px;top:394px;width:5px;height:1px;background-position:-1px 0px;"></div>
<div style="left:590px;top:390px;width:9px;height:9px;background:#808080;"></div>
<div style="left:591px;top:391px;width:7px;height:7px;background:#fff;"></div>
<div style="left:592px;top:394px;width:5px;height:1px;background:#000;"></div>
<div style="left:594px;top:392px;width:1px;height:5px;background:#000;"></div>
<div style="left:606px;top:389px;width:11px;height:11px;background:#000;"></div>
<div style="left:607px;top:390px;width:8px;height:8px;background:#fff;"></div>
<div style="left:608px;top:391px;width:7px;height:7px;background:#0000ff;"></div>
<span class="t" style="left:624.3px;top:387px;height:15px;line-height:15px;color:#000;font-size:13.5px;transform:scaleX(1.0566)">0.03</span>
<span class="t" style="left:656.0625px;top:387px;height:15px;line-height:15px;color:#000;font-size:13.5px;transform:scaleX(1.0920)">initialpmatmodule.setinitialpmat_</span>
<div class="dot" style="left:574px;top:402px;width:1px;height:15px;background-position:0px 0px;"></div>
<div class="dot" style="left:594px;top:402px;width:1px;height:3px;background-position:0px 0px;"></div>
<div class="dot" style="left:594px;top:414px;width:1px;height:3px;background-position:0px 0px;"></div>
<div class="dot" style="left:599px;top:409px;width:5px;height:1px;background-position:-1px -1px;"></div>
<div style="left:590px;top:405px;width:9px;height:9px;background:#808080;"></div>
<div style="left:591px;top:406px;width:7px;height:7px;background:#fff;"></div>
<div style="left:592px;top:409px;width:5px;height:1px;background:#000;"></div>
<div style="left:594px;top:407px;width:1px;height:5px;background:#000;"></div>
<div style="left:606px;top:404px;width:11px;height:11px;background:#000;"></div>
<div style="left:607px;top:405px;width:8px;height:8px;background:#fff;"></div>
<div style="left:608px;top:406px;width:7px;height:7px;background:#00ff8a;"></div>
<span class="t" style="left:624.3px;top:402px;height:15px;line-height:15px;color:#000;font-size:13.5px;transform:scaleX(1.0617)">1067.71</span>
<span class="t" style="left:680.109375px;top:402px;height:15px;line-height:15px;color:#000;font-size:13.5px;transform:scaleX(1.0681)">scfmodule.scfvalenceoutputrho_</span>
<div class="dot" style="left:574px;top:417px;width:1px;height:15px;background-position:0px -1px;"></div>
<div class="dot" style="left:594px;top:417px;width:1px;height:3px;background-position:0px -1px;"></div>
<div class="dot" style="left:594px;top:429px;width:1px;height:3px;background-position:0px -1px;"></div>
<div class="dot" style="left:599px;top:424px;width:5px;height:1px;background-position:-1px 0px;"></div>
<div style="left:590px;top:420px;width:9px;height:9px;background:#808080;"></div>
<div style="left:591px;top:421px;width:7px;height:7px;background:#fff;"></div>
<div style="left:592px;top:424px;width:5px;height:1px;background:#000;"></div>
<div style="left:594px;top:422px;width:1px;height:5px;background:#000;"></div>
<div style="left:606px;top:419px;width:11px;height:11px;background:#000;"></div>
<div style="left:607px;top:420px;width:8px;height:8px;background:#fff;"></div>
<div style="left:608px;top:421px;width:7px;height:7px;background:#26ff00;"></div>
<span class="t" style="left:624.3px;top:417px;height:15px;line-height:15px;color:#000;font-size:13.5px;transform:scaleX(1.0617)">1444.66</span>
<span class="t" style="left:680.109375px;top:417px;height:15px;line-height:15px;color:#000;font-size:13.5px;transform:scaleX(1.0678)">scfmodule.scffitrho_</span>
<div class="dot" style="left:574px;top:432px;width:1px;height:15px;background-position:0px 0px;"></div>
<div class="dot" style="left:594px;top:432px;width:1px;height:8px;background-position:0px 0px;"></div>
<div class="dot" style="left:594px;top:440px;width:1px;height:7px;background-position:0px 0px;"></div>
<div class="dot" style="left:595px;top:439px;width:9px;height:1px;background-position:-1px -1px;"></div>
<div style="left:606px;top:434px;width:11px;height:11px;background:#000;"></div>
<div style="left:607px;top:435px;width:8px;height:8px;background:#fff;"></div>
<div style="left:608px;top:436px;width:7px;height:7px;background:#0000ff;"></div>
<span class="t" style="left:624.3px;top:432px;height:15px;line-height:15px;color:#000;font-size:13.5px;transform:scaleX(1.0566)">0.02</span>
<span class="t" style="left:656.0625px;top:432px;height:15px;line-height:15px;color:#000;font-size:13.5px;transform:scaleX(1.0442)">ctl_</span>
<div class="dot" style="left:574px;top:447px;width:1px;height:15px;background-position:0px -1px;"></div>
<div class="dot" style="left:594px;top:447px;width:1px;height:3px;background-position:0px -1px;"></div>
<div class="dot" style="left:594px;top:459px;width:1px;height:3px;background-position:0px -1px;"></div>
<div class="dot" style="left:599px;top:454px;width:5px;height:1px;background-position:-1px 0px;"></div>
<div style="left:590px;top:450px;width:9px;height:9px;background:#808080;"></div>
<div style="left:591px;top:451px;width:7px;height:7px;background:#fff;"></div>
<div style="left:592px;top:454px;width:5px;height:1px;background:#000;"></div>
<div style="left:594px;top:452px;width:1px;height:5px;background:#000;"></div>
<div style="left:606px;top:449px;width:11px;height:11px;background:#000;"></div>
<div style="left:607px;top:450px;width:8px;height:8px;background:#fff;"></div>
<div style="left:608px;top:451px;width:7px;height:7px;background:#0000ff;"></div>
<span class="t" style="left:624.3px;top:447px;height:15px;line-height:15px;color:#000;font-size:13.5px;transform:scaleX(1.0566)">2.65</span>
<span class="t" style="left:656.0625px;top:447px;height:15px;line-height:15px;color:#000;font-size:13.5px;transform:scaleX(1.0713)">scfmodule.scfpotential_</span>
<div class="dot" style="left:574px;top:462px;width:1px;height:15px;background-position:0px 0px;"></div>
<div class="dot" style="left:594px;top:462px;width:1px;height:3px;background-position:0px 0px;"></div>
<div class="dot" style="left:594px;top:474px;width:1px;height:3px;background-position:0px 0px;"></div>
<div class="dot" style="left:599px;top:469px;width:5px;height:1px;background-position:-1px -1px;"></div>
<div style="left:590px;top:465px;width:9px;height:9px;background:#808080;"></div>
<div style="left:591px;top:466px;width:7px;height:7px;background:#fff;"></div>
<div style="left:592px;top:469px;width:5px;height:1px;background:#000;"></div>
<div style="left:606px;top:464px;width:11px;height:11px;background:#000;"></div>
<div style="left:607px;top:465px;width:8px;height:8px;background:#fff;"></div>
<div style="left:608px;top:466px;width:7px;height:7px;background:#0000ff;"></div>
<span class="t" style="left:624.3px;top:462px;height:15px;line-height:15px;color:#000;font-size:13.5px;transform:scaleX(1.0566)">0.01</span>
<span class="t" style="left:656.0625px;top:462px;height:15px;line-height:15px;color:#000;font-size:13.5px;transform:scaleX(1.0517)">scfmodule.scfeigsys_</span>
<div class="dot" style="left:574px;top:477px;width:1px;height:15px;background-position:0px -1px;"></div>
<div class="dot" style="left:594px;top:477px;width:1px;height:15px;background-position:0px -1px;"></div>
<div class="dot" style="left:614px;top:477px;width:1px;height:8px;background-position:0px -1px;"></div>
<div class="dot" style="left:614px;top:485px;width:1px;height:7px;background-position:0px -1px;"></div>
<div class="dot" style="left:615px;top:484px;width:9px;height:1px;background-position:-1px 0px;"></div>
<div style="left:626px;top:479px;width:11px;height:11px;background:#000;"></div>
<div style="left:627px;top:480px;width:8px;height:8px;background:#fff;"></div>
<div style="left:628px;top:481px;width:7px;height:7px;background:#0000ff;"></div>
<span class="t" style="left:644.3px;top:477px;height:15px;line-height:15px;color:#000;font-size:13.5px;transform:scaleX(1.0566)">0.01</span>
<span class="t" style="left:676.0625px;top:477px;height:15px;line-height:15px;color:#000;font-size:13.5px;transform:scaleX(1.0442)">ctl_</span>
<div class="dot" style="left:574px;top:492px;width:1px;height:15px;background-position:0px 0px;"></div>
<div class="dot" style="left:594px;top:492px;width:1px;height:15px;background-position:0px 0px;"></div>
<div class="dot" style="left:614px;top:492px;width:1px;height:3px;background-position:0px 0px;"></div>
<div class="dot" style="left:619px;top:499px;width:5px;height:1px;background-position:-1px -1px;"></div>
<div style="left:610px;top:495px;width:9px;height:9px;background:#808080;"></div>
<div style="left:611px;top:496px;width:7px;height:7px;background:#fff;"></div>
<div style="left:612px;top:499px;width:5px;height:1px;background:#000;"></div>
<div style="left:614px;top:497px;width:1px;height:5px;background:#000;"></div>
<div style="left:626px;top:494px;width:11px;height:11px;background:#000;"></div>
<div style="left:627px;top:495px;width:8px;height:8px;background:#fff;"></div>
<div style="left:628px;top:496px;width:7px;height:7px;background:#5aff00;"></div>
<span class="t" style="left:644.3px;top:492px;height:15px;line-height:15px;color:#000;font-size:13.5px;transform:scaleX(1.0617)">1582.22</span>
<span class="t" style="left:700.109375px;top:492px;height:15px;line-height:15px;color:#000;font-size:13.5px;transform:scaleX(1.0532)">eigsysmodule.eigsys_</span>
<div class="dot" style="left:574px;top:507px;width:1px;height:15px;background-position:0px -1px;"></div>
<div class="dot" style="left:594px;top:507px;width:1px;height:3px;background-position:0px -1px;"></div>
<div class="dot" style="left:594px;top:519px;width:1px;height:3px;background-position:0px -1px;"></div>
<div class="dot" style="left:599px;top:514px;width:5px;height:1px;background-position:-1px 0px;"></div>
<div style="left:590px;top:510px;width:9px;height:9px;background:#808080;"></div>
<div style="left:591px;top:511px;width:7px;height:7px;background:#fff;"></div>
<div style="left:592px;top:514px;width:5px;height:1px;background:#000;"></div>
<div style="left:594px;top:512px;width:1px;height:5px;background:#000;"></div>
<div style="left:606px;top:509px;width:11px;height:11px;background:#000;"></div>
<div style="left:607px;top:510px;width:8px;height:8px;background:#fff;"></div>
<div style="left:608px;top:511px;width:7px;height:7px;background:#0000ff;"></div>
<span class="t" style="left:624.3px;top:507px;height:15px;line-height:15px;color:#000;font-size:13.5px;transform:scaleX(1.0566)">0.76</span>
<span class="t" style="left:656.0625px;top:507px;height:15px;line-height:15px;color:#000;font-size:13.5px;transform:scaleX(1.0633)">scfmodule.scffermi_</span>
<div class="dot" style="left:574px;top:522px;width:1px;height:15px;background-position:0px 0px;"></div>
<div class="dot" style="left:594px;top:522px;width:1px;height:3px;background-position:0px 0px;"></div>
<div class="dot" style="left:594px;top:534px;width:1px;height:3px;background-position:0px 0px;"></div>
<div class="dot" style="left:599px;top:529px;width:5px;height:1px;background-position:-1px -1px;"></div>
<div style="left:590px;top:525px;width:9px;height:9px;background:#808080;"></div>
<div style="left:591px;top:526px;width:7px;height:7px;background:#fff;"></div>
<div style="left:592px;top:529px;width:5px;height:1px;background:#000;"></div>
<div style="left:594px;top:527px;width:1px;height:5px;background:#000;"></div>
<div style="left:606px;top:524px;width:11px;height:11px;background:#000;"></div>
<div style="left:607px;top:525px;width:8px;height:8px;background:#fff;"></div>
<div style="left:608px;top:526px;width:7px;height:7px;background:#0000ff;"></div>
<span class="t" style="left:624.3px;top:522px;height:15px;line-height:15px;color:#000;font-size:13.5px;transform:scaleX(1.0566)">3.07</span>
<span class="t" style="left:656.0625px;top:522px;height:15px;line-height:15px;color:#000;font-size:13.5px;transform:scaleX(1.0733)">scfmodule.scfpmatrix_</span>
<div class="dot" style="left:574px;top:537px;width:1px;height:15px;background-position:0px -1px;"></div>
<div class="dot" style="left:594px;top:537px;width:1px;height:3px;background-position:0px -1px;"></div>
<div class="dot" style="left:594px;top:549px;width:1px;height:3px;background-position:0px -1px;"></div>
<div class="dot" style="left:599px;top:544px;width:5px;height:1px;background-position:-1px 0px;"></div>
<div style="left:590px;top:540px;width:9px;height:9px;background:#808080;"></div>
<div style="left:591px;top:541px;width:7px;height:7px;background:#fff;"></div>
<div style="left:592px;top:544px;width:5px;height:1px;background:#000;"></div>
<div style="left:594px;top:542px;width:1px;height:5px;background:#000;"></div>
<div style="left:606px;top:539px;width:11px;height:11px;background:#000;"></div>
<div style="left:607px;top:540px;width:8px;height:8px;background:#fff;"></div>
<div style="left:608px;top:541px;width:7px;height:7px;background:#00a8ff;"></div>
<span class="t" style="left:624.3px;top:537px;height:15px;line-height:15px;color:#000;font-size:13.5px;transform:scaleX(1.0606)">370.28</span>
<span class="t" style="left:672.09375px;top:537px;height:15px;line-height:15px;color:#000;font-size:13.5px;transform:scaleX(1.0679)">scfmodule.scfnextinputrho_</span>
<div class="dot" style="left:574px;top:552px;width:1px;height:15px;background-position:0px 0px;"></div>
<div class="dot" style="left:594px;top:552px;width:1px;height:3px;background-position:0px 0px;"></div>
<div class="dot" style="left:599px;top:559px;width:5px;height:1px;background-position:-1px -1px;"></div>
<div style="left:590px;top:555px;width:9px;height:9px;background:#808080;"></div>
<div style="left:591px;top:556px;width:7px;height:7px;background:#fff;"></div>
<div style="left:592px;top:559px;width:5px;height:1px;background:#000;"></div>
<div style="left:594px;top:557px;width:1px;height:5px;background:#000;"></div>
<div style="left:606px;top:554px;width:11px;height:11px;background:#000;"></div>
<div style="left:607px;top:555px;width:8px;height:8px;background:#fff;"></div>
<div style="left:608px;top:556px;width:7px;height:7px;background:#0050ff;"></div>
<span class="t" style="left:624.3px;top:552px;height:15px;line-height:15px;color:#000;font-size:13.5px;transform:scaleX(1.0606)">140.31</span>
<span class="t" style="left:672.09375px;top:552px;height:15px;line-height:15px;color:#000;font-size:13.5px;transform:scaleX(1.0776)">exactdensitygradientmodule.exactdensitygradient_</span>
<div class="dot" style="left:574px;top:567px;width:1px;height:3px;background-position:0px -1px;"></div>
<div class="dot" style="left:574px;top:579px;width:1px;height:3px;background-position:0px -1px;"></div>
<div class="dot" style="left:579px;top:574px;width:5px;height:1px;background-position:-1px 0px;"></div>
<div style="left:570px;top:570px;width:9px;height:9px;background:#808080;"></div>
<div style="left:571px;top:571px;width:7px;height:7px;background:#fff;"></div>
<div style="left:572px;top:574px;width:5px;height:1px;background:#000;"></div>
<div style="left:586px;top:569px;width:11px;height:11px;background:#000;"></div>
<div style="left:587px;top:570px;width:8px;height:8px;background:#fff;"></div>
<div style="left:588px;top:571px;width:7px;height:7px;background:#0000ff;"></div>
<span class="t" style="left:604.3px;top:567px;height:15px;line-height:15px;color:#000;font-size:13.5px;transform:scaleX(1.0566)">0.12</span>
<span class="t" style="left:636.0625px;top:567px;height:15px;line-height:15px;color:#000;font-size:13.5px;transform:scaleX(1.0826)">prprtsmodule.prprts_</span>
<div class="dot" style="left:574px;top:582px;width:1px;height:15px;background-position:0px 0px;"></div>
<div class="dot" style="left:594px;top:582px;width:1px;height:8px;background-position:0px 0px;"></div>
<div class="dot" style="left:594px;top:590px;width:1px;height:7px;background-position:0px 0px;"></div>
<div class="dot" style="left:595px;top:589px;width:9px;height:1px;background-position:-1px -1px;"></div>
<div style="left:606px;top:584px;width:11px;height:11px;background:#000;"></div>
<div style="left:607px;top:585px;width:8px;height:8px;background:#fff;"></div>
<div style="left:608px;top:586px;width:7px;height:7px;background:#0000ff;"></div>
<span class="t" style="left:624.3px;top:582px;height:15px;line-height:15px;color:#000;font-size:13.5px;transform:scaleX(1.0566)">0.03</span>
<span class="t" style="left:656.0625px;top:582px;height:15px;line-height:15px;color:#000;font-size:13.5px;transform:scaleX(1.0442)">ctl_</span>
<div class="dot" style="left:574px;top:597px;width:1px;height:15px;background-position:0px -1px;"></div>
<div class="dot" style="left:594px;top:597px;width:1px;height:3px;background-position:0px -1px;"></div>
<div class="dot" style="left:594px;top:609px;width:1px;height:3px;background-position:0px -1px;"></div>
<div class="dot" style="left:599px;top:604px;width:5px;height:1px;background-position:-1px 0px;"></div>
<div style="left:590px;top:600px;width:9px;height:9px;background:#808080;"></div>
<div style="left:591px;top:601px;width:7px;height:7px;background:#fff;"></div>
<div style="left:592px;top:604px;width:5px;height:1px;background:#000;"></div>
<div style="left:594px;top:602px;width:1px;height:5px;background:#000;"></div>
<div style="left:606px;top:599px;width:11px;height:11px;background:#000;"></div>
<div style="left:607px;top:600px;width:8px;height:8px;background:#fff;"></div>
<div style="left:608px;top:601px;width:7px;height:7px;background:#0020ff;"></div>
<span class="t" style="left:624.3px;top:597px;height:15px;line-height:15px;color:#000;font-size:13.5px;transform:scaleX(1.0591)">62.45</span>
<span class="t" style="left:664.078125px;top:597px;height:15px;line-height:15px;color:#000;font-size:13.5px;transform:scaleX(1.0668)">energymodule.energy_</span>
<div class="dot" style="left:574px;top:612px;width:1px;height:15px;background-position:0px 0px;"></div>
<div class="dot" style="left:594px;top:612px;width:1px;height:3px;background-position:0px 0px;"></div>
<div class="dot" style="left:594px;top:624px;width:1px;height:3px;background-position:0px 0px;"></div>
<div class="dot" style="left:599px;top:619px;width:5px;height:1px;background-position:-1px -1px;"></div>
<div style="left:590px;top:615px;width:9px;height:9px;background:#808080;"></div>
<div style="left:591px;top:616px;width:7px;height:7px;background:#fff;"></div>
<div style="left:592px;top:619px;width:5px;height:1px;background:#000;"></div>
<div style="left:594px;top:617px;width:1px;height:5px;background:#000;"></div>
<div style="left:606px;top:614px;width:11px;height:11px;background:#000;"></div>
<div style="left:607px;top:615px;width:8px;height:8px;background:#fff;"></div>
<div style="left:608px;top:616px;width:7px;height:7px;background:#0000ff;"></div>
<span class="t" style="left:624.3px;top:612px;height:15px;line-height:15px;color:#000;font-size:13.5px;transform:scaleX(1.0566)">0.89</span>
<span class="t" style="left:656.0625px;top:612px;height:15px;line-height:15px;color:#000;font-size:13.5px;transform:scaleX(1.0594)">voronoichargesmodule.calcvoronoicharges_</span>
<div class="dot" style="left:574px;top:627px;width:1px;height:15px;background-position:0px -1px;"></div>
<div class="dot" style="left:594px;top:627px;width:1px;height:3px;background-position:0px -1px;"></div>
<div class="dot" style="left:594px;top:639px;width:1px;height:3px;background-position:0px -1px;"></div>
<div class="dot" style="left:599px;top:634px;width:5px;height:1px;background-position:-1px 0px;"></div>
<div style="left:590px;top:630px;width:9px;height:9px;background:#808080;"></div>
<div style="left:591px;top:631px;width:7px;height:7px;background:#fff;"></div>
<div style="left:592px;top:634px;width:5px;height:1px;background:#000;"></div>
<div style="left:594px;top:632px;width:1px;height:5px;background:#000;"></div>
<div style="left:606px;top:629px;width:11px;height:11px;background:#000;"></div>
<div style="left:607px;top:630px;width:8px;height:8px;background:#fff;"></div>
<div style="left:608px;top:631px;width:7px;height:7px;background:#0000ff;"></div>
<span class="t" style="left:624.3px;top:627px;height:15px;line-height:15px;color:#000;font-size:13.5px;transform:scaleX(1.0566)">0.20</span>
<span class="t" style="left:656.0625px;top:627px;height:15px;line-height:15px;color:#000;font-size:13.5px;transform:scaleX(1.0607)">hirshfeldchargesmodule.hirshfeldcharges_</span>
<div class="dot" style="left:574px;top:642px;width:1px;height:15px;background-position:0px 0px;"></div>
<div class="dot" style="left:594px;top:642px;width:1px;height:3px;background-position:0px 0px;"></div>
<div class="dot" style="left:594px;top:654px;width:1px;height:3px;background-position:0px 0px;"></div>
<div class="dot" style="left:599px;top:649px;width:5px;height:1px;background-position:-1px -1px;"></div>
<div style="left:590px;top:645px;width:9px;height:9px;background:#808080;"></div>
<div style="left:591px;top:646px;width:7px;height:7px;background:#fff;"></div>
<div style="left:592px;top:649px;width:5px;height:1px;background:#000;"></div>
<div style="left:594px;top:647px;width:1px;height:5px;background:#000;"></div>
<div style="left:606px;top:644px;width:11px;height:11px;background:#000;"></div>
<div style="left:607px;top:645px;width:8px;height:8px;background:#fff;"></div>
<div style="left:608px;top:646px;width:7px;height:7px;background:#0000ff;"></div>
<span class="t" style="left:624.3px;top:642px;height:15px;line-height:15px;color:#000;font-size:13.5px;transform:scaleX(1.0566)">0.09</span>
<span class="t" style="left:656.0625px;top:642px;height:15px;line-height:15px;color:#000;font-size:13.5px;transform:scaleX(1.0452)">formfa_</span>
<div class="dot" style="left:574px;top:657px;width:1px;height:15px;background-position:0px -1px;"></div>
<div class="dot" style="left:594px;top:657px;width:1px;height:3px;background-position:0px -1px;"></div>
<div class="dot" style="left:594px;top:669px;width:1px;height:3px;background-position:0px -1px;"></div>
<div class="dot" style="left:599px;top:664px;width:5px;height:1px;background-position:-1px 0px;"></div>
<div style="left:590px;top:660px;width:9px;height:9px;background:#808080;"></div>
<div style="left:591px;top:661px;width:7px;height:7px;background:#fff;"></div>
<div style="left:592px;top:664px;width:5px;height:1px;background:#000;"></div>
<div style="left:594px;top:662px;width:1px;height:5px;background:#000;"></div>
<div style="left:606px;top:659px;width:11px;height:11px;background:#000;"></div>
<div style="left:607px;top:660px;width:8px;height:8px;background:#fff;"></div>
<div style="left:608px;top:661px;width:7px;height:7px;background:#00ff94;"></div>
<span class="t" style="left:624.3px;top:657px;height:15px;line-height:15px;color:#000;font-size:13.5px;transform:scaleX(1.0617)">1022.61</span>
<span class="t" style="left:680.109375px;top:657px;height:15px;line-height:15px;color:#000;font-size:13.5px;transform:scaleX(1.0691)">nucleargradientsmodule.nucleargradients_</span>
<div class="dot" style="left:574px;top:672px;width:1px;height:15px;background-position:0px 0px;"></div>
<div class="dot" style="left:594px;top:672px;width:1px;height:3px;background-position:0px 0px;"></div>
<div class="dot" style="left:594px;top:684px;width:1px;height:3px;background-position:0px 0px;"></div>
<div class="dot" style="left:599px;top:679px;width:5px;height:1px;background-position:-1px -1px;"></div>
<div style="left:590px;top:675px;width:9px;height:9px;background:#808080;"></div>
<div style="left:591px;top:676px;width:7px;height:7px;background:#fff;"></div>
<div style="left:592px;top:679px;width:5px;height:1px;background:#000;"></div>
<div style="left:594px;top:677px;width:1px;height:5px;background:#000;"></div>
<div style="left:606px;top:674px;width:11px;height:11px;background:#000;"></div>
<div style="left:607px;top:675px;width:8px;height:8px;background:#fff;"></div>
<div style="left:608px;top:676px;width:7px;height:7px;background:#0000ff;"></div>
<span class="t" style="left:624.3px;top:672px;height:15px;line-height:15px;color:#000;font-size:13.5px;transform:scaleX(1.0566)">0.04</span>
<span class="t" style="left:656.0625px;top:672px;height:15px;line-height:15px;color:#000;font-size:13.5px;transform:scaleX(1.0159)">kf.kfopflpp_</span>
<div class="dot" style="left:574px;top:687px;width:1px;height:15px;background-position:0px -1px;"></div>
<div class="dot" style="left:594px;top:687px;width:1px;height:3px;background-position:0px -1px;"></div>
<div class="dot" style="left:594px;top:699px;width:1px;height:3px;background-position:0px -1px;"></div>
<div class="dot" style="left:599px;top:694px;width:5px;height:1px;background-position:-1px 0px;"></div>
<div style="left:590px;top:690px;width:9px;height:9px;background:#808080;"></div>
<div style="left:591px;top:691px;width:7px;height:7px;background:#fff;"></div>
<div style="left:592px;top:694px;width:5px;height:1px;background:#000;"></div>
<div style="left:594px;top:692px;width:1px;height:5px;background:#000;"></div>
<div style="left:606px;top:689px;width:11px;height:11px;background:#000;"></div>
<div style="left:607px;top:690px;width:8px;height:8px;background:#fff;"></div>
<div style="left:608px;top:691px;width:7px;height:7px;background:#00a8ff;"></div>
<span class="t" style="left:624.3px;top:687px;height:15px;line-height:15px;color:#000;font-size:13.5px;transform:scaleX(1.0606)">370.14</span>
<span class="t" style="left:672.09375px;top:687px;height:15px;line-height:15px;color:#000;font-size:13.5px;transform:scaleX(1.0559)">dosmodule.dos_</span>
<div class="dot" style="left:574px;top:702px;width:1px;height:15px;background-position:0px 0px;"></div>
<div class="dot" style="left:594px;top:702px;width:1px;height:3px;background-position:0px 0px;"></div>
<div class="dot" style="left:594px;top:714px;width:1px;height:3px;background-position:0px 0px;"></div>
<div class="dot" style="left:599px;top:709px;width:5px;height:1px;background-position:-1px -1px;"></div>
<div style="left:590px;top:705px;width:9px;height:9px;background:#808080;"></div>
<div style="left:591px;top:706px;width:7px;height:7px;background:#fff;"></div>
<div style="left:592px;top:709px;width:5px;height:1px;background:#000;"></div>
<div style="left:594px;top:707px;width:1px;height:5px;background:#000;"></div>
<div style="left:606px;top:704px;width:11px;height:11px;background:#000;"></div>
<div style="left:607px;top:705px;width:8px;height:8px;background:#fff;"></div>
<div style="left:608px;top:706px;width:7px;height:7px;background:#0094ff;"></div>
<span class="t" style="left:624.3px;top:702px;height:15px;line-height:15px;color:#000;font-size:13.5px;transform:scaleX(1.0606)">320.06</span>
<span class="t" style="left:672.09375px;top:702px;height:15px;line-height:15px;color:#000;font-size:13.5px;transform:scaleX(1.0892)">bzstructforpathmodule.bzstructforpath_</span>
<div class="dot" style="left:574px;top:717px;width:1px;height:15px;background-position:0px -1px;"></div>
<div class="dot" style="left:594px;top:717px;width:1px;height:3px;background-position:0px -1px;"></div>
<div class="dot" style="left:599px;top:724px;width:5px;height:1px;background-position:-1px 0px;"></div>
<div style="left:590px;top:720px;width:9px;height:9px;background:#808080;"></div>
<div style="left:591px;top:721px;width:7px;height:7px;background:#fff;"></div>
<div style="left:592px;top:724px;width:5px;height:1px;background:#000;"></div>
<div style="left:594px;top:722px;width:1px;height:5px;background:#000;"></div>
<div style="left:606px;top:719px;width:11px;height:11px;background:#000;"></div>
<div style="left:607px;top:720px;width:8px;height:8px;background:#fff;"></div>
<div style="left:608px;top:721px;width:7px;height:7px;background:#0000ff;"></div>
<span class="t" style="left:624.3px;top:717px;height:15px;line-height:15px;color:#000;font-size:13.5px;transform:scaleX(1.0566)">0.06</span>
<span class="t" style="left:656.0625px;top:717px;height:15px;line-height:15px;color:#000;font-size:13.5px;transform:scaleX(1.0571)">bandperiodicdipolemodule.bandperiodicdipole_</span>
<div class="dot" style="left:574px;top:732px;width:1px;height:3px;background-position:0px 0px;"></div>
<div class="dot" style="left:579px;top:739px;width:5px;height:1px;background-position:-1px -1px;"></div>
<div style="left:570px;top:735px;width:9px;height:9px;background:#808080;"></div>
<div style="left:571px;top:736px;width:7px;height:7px;background:#fff;"></div>
<div style="left:572px;top:739px;width:5px;height:1px;background:#000;"></div>
<div style="left:574px;top:737px;width:1px;height:5px;background:#000;"></div>
<div style="left:586px;top:734px;width:11px;height:11px;background:#000;"></div>
<div style="left:587px;top:735px;width:8px;height:8px;background:#fff;"></div>
<div style="left:588px;top:736px;width:7px;height:7px;background:#0000ff;"></div>
<span class="t" style="left:604.3px;top:732px;height:15px;line-height:15px;color:#000;font-size:13.5px;transform:scaleX(1.0566)">0.40</span>
<span class="t" style="left:636.0625px;top:732px;height:15px;line-height:15px;color:#000;font-size:13.5px;transform:scaleX(1.0781)">kmatrixiomodule.copykmatrix_</span>
<div style="left:629px;top:116px;width:14px;height:1px;background:#fff;"></div>
<div style="left:258px;top:177px;width:1px;height:15px;background:#00e800;"></div>
<div style="left:247px;top:207px;width:1px;height:15px;background:#00e800;"></div>
<div style="left:245px;top:222px;width:1px;height:15px;background:#00e800;"></div>
<div style="left:4px;top:779px;width:508px;height:36px;background:#000;"></div>
<div style="left:5px;top:780px;width:506px;height:34px;background:#fff;"></div>
<div style="left:5px;top:809px;width:506px;height:1px;background:#000;"></div>
<div style="left:6px;top:810px;width:506px;height:3px;background:linear-gradient(90deg,#0000ff 0%,#00ffff 10%,#00ff00 20%,#ffff00 30%,rgb(255,245,0) 33.5%,rgb(255,236,0) 37.0%,rgb(255,226,0) 40.5%,rgb(255,216,0) 44.0%,rgb(255,206,0) 47.5%,rgb(255,195,0) 51.0%,rgb(255,185,0) 54.5%,rgb(255,174,0) 58.0%,rgb(255,163,0) 61.5%,rgb(255,152,0) 65.0%,rgb(255,140,0) 68.5%,rgb(255,128,0) 72.0%,rgb(255,116,0) 75.5%,rgb(255,103,0) 79.0%,rgb(255,90,0) 82.5%,rgb(255,76,0) 86.0%,rgb(255,61,0) 89.5%,rgb(255,45,0) 93.0%,rgb(255,27,0) 96.5%,rgb(255,0,0) 100.0%);"></div>
<span class="t" style="left:6.4px;top:781px;height:16px;line-height:16px;color:#000;font-size:13.5px;transform:scaleX(1.0680)">0.00</span>
<span class="t" style="left:457.390625px;top:781px;height:16px;line-height:16px;color:#000;font-size:13.5px;transform:scaleX(1.0678)">6713.52</span>
<span class="t" style="left:185px;top:781px;height:16px;line-height:16px;color:#000;font-size:13.5px;transform:scaleX(1.0628)">6713.52 (100.00%)</span>
<div style="left:520px;top:779px;width:538px;height:36px;background:#000;"></div>
<div style="left:521px;top:780px;width:536px;height:34px;background:#fff;"></div>
<div style="left:521px;top:809px;width:536px;height:1px;background:#000;"></div>
<span class="t" style="left:522.4px;top:781px;height:16px;line-height:16px;color:#000;font-size:13.5px;transform:scaleX(1.0680)">0.00</span>
<span class="t" style="left:1003.390625px;top:781px;height:16px;line-height:16px;color:#000;font-size:13.5px;transform:scaleX(1.0678)">6713.52</span>
<span class="t" style="left:736px;top:781px;height:16px;line-height:16px;color:#000;font-size:13.5px;transform:scaleX(1.0605)">0.96 (0.01%)</span>
<div style="left:2px;top:819px;width:1px;height:20px;background:#fff;"></div>
<div style="left:3px;top:819px;width:1061px;height:20px;background:linear-gradient(90deg,#0000ff 0%,#00ffff 10%,#00ff00 20%,#ffff00 30%,rgb(255,245,0) 33.5%,rgb(255,236,0) 37.0%,rgb(255,226,0) 40.5%,rgb(255,216,0) 44.0%,rgb(255,206,0) 47.5%,rgb(255,195,0) 51.0%,rgb(255,185,0) 54.5%,rgb(255,174,0) 58.0%,rgb(255,163,0) 61.5%,rgb(255,152,0) 65.0%,rgb(255,140,0) 68.5%,rgb(255,128,0) 72.0%,rgb(255,116,0) 75.5%,rgb(255,103,0) 79.0%,rgb(255,90,0) 82.5%,rgb(255,76,0) 86.0%,rgb(255,61,0) 89.5%,rgb(255,45,0) 93.0%,rgb(255,27,0) 96.5%,rgb(255,0,0) 100.0%);"></div>
<div style="left:1043px;top:847px;width:23px;height:22px;background:#000;"></div>
<div style="left:1043px;top:847px;width:22px;height:21px;background:#fff;"></div>
<div style="left:1044px;top:848px;width:21px;height:20px;background:#808080;"></div>
<div style="left:1044px;top:848px;width:20px;height:19px;background:#d4d0c8;"></div>
<svg style="left:1043px;top:847px" width="23" height="22" viewBox="0 0 23 22"><defs><linearGradient id="ck" x1="0" y1="0" x2="1" y2="1"><stop offset="0" stop-color="#078c26"/><stop offset="1" stop-color="#44c450"/></linearGradient></defs><path d="M9.6 17 L17.3 4.6" stroke="#46c254" stroke-width="2.3" fill="none" stroke-linecap="round"/><path d="M4.4 11.2 L9.6 17" stroke="url(#ck)" stroke-width="3" fill="none" stroke-linecap="round"/></svg>
</div></body></html>
